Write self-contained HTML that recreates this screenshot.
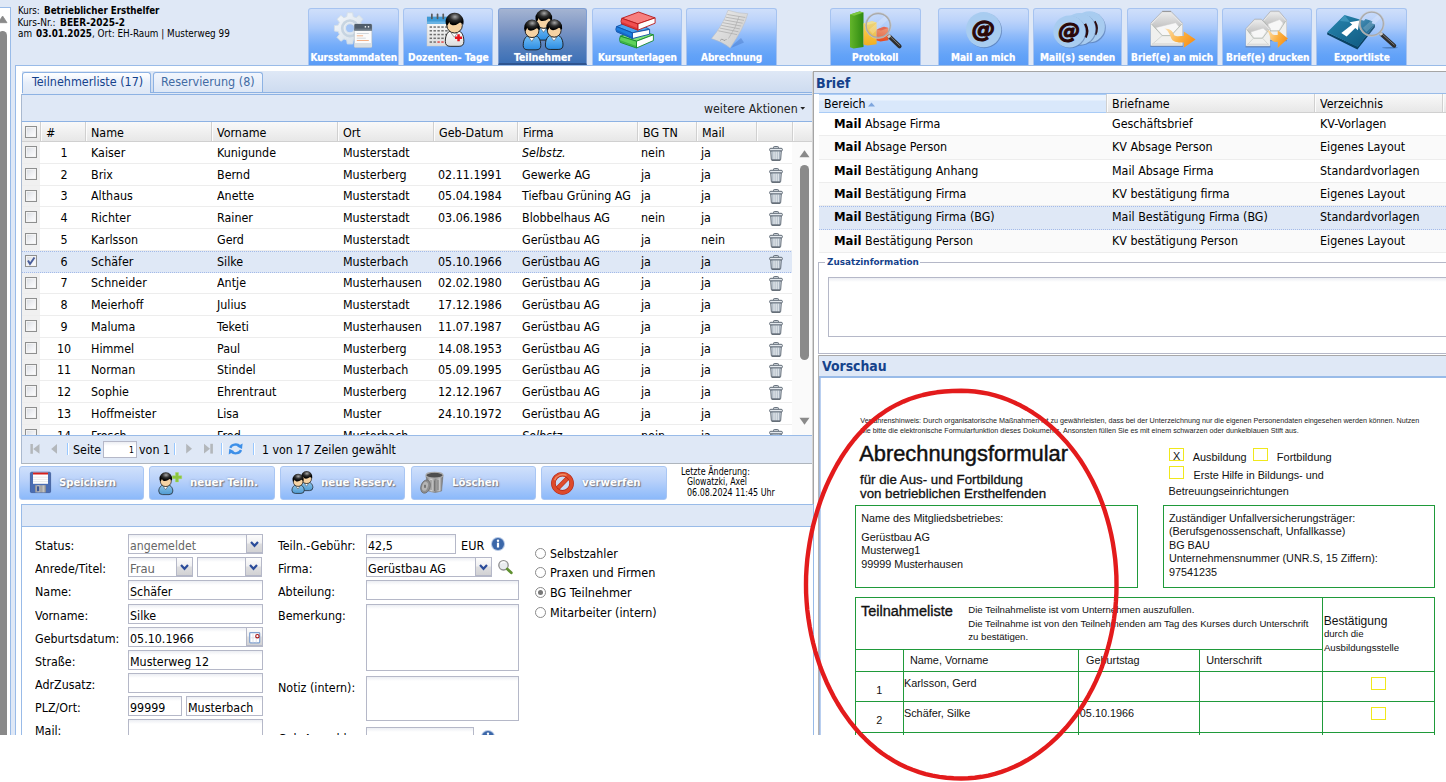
<!DOCTYPE html><html lang="de"><head><meta charset="utf-8"><title>Teilnehmer</title><style>
*{box-sizing:border-box;margin:0;padding:0}
html,body{width:1446px;height:782px;overflow:hidden;background:#fff}
body{position:relative;font-family:"DejaVu Sans Condensed","Liberation Sans",sans-serif;font-size:13px;color:#000}
.a{position:absolute}
.x{position:absolute;white-space:pre}
.bg{position:absolute;left:0;top:0;width:1446px;height:735px;background:#dfe8f6;overflow:hidden}
.tb{position:absolute;top:8px;width:90px;height:57px;border:1px solid #a6c3f0;border-bottom:0;border-radius:3px 3px 0 0;background:linear-gradient(#cfdffa 0%,#bcd3fa 21%,#a7c8fa 35%,#90bbfa 47%,#74acf9 65%,#63a3f8 82%,#5a9cf7 100%)}
.tb.on{border-color:#7f9fd4;background:linear-gradient(#a4b4d2 0%,#8098c5 35%,#557fbc 70%,#3c70b6 100%);border-bottom:2px solid #2e548f}
.tl{color:#fff;text-shadow:0 0 1px rgba(255,255,255,.55)}
.btn{position:absolute;top:466px;width:125px;height:34px;border:1px solid #a9c6f3;border-radius:3px;background:linear-gradient(#cfe0fb 0%,#bad2fa 40%,#8bb9fa 100%)}
.bl{color:#fff;text-shadow:1px 1px 1px #7d7a80,0 0 2px rgba(120,140,180,.8)}
.hd{position:absolute;background:linear-gradient(#f9f9f9 0%,#f2f2f2 40%,#e7e7e7 100%);border-bottom:1px solid #d0d0d0}
.hs{position:absolute;width:2px;border-left:1px solid #d0d0d0;border-right:1px solid #fcfcfc}
.row{position:absolute;left:0;width:771px;height:21.75px;border-bottom:1px solid #ededed;background:#fff}
.row.sel{background:#dfe8f6;border-top:1px dotted #a3bae9;border-bottom:1px dotted #a3bae9}
.cb{position:absolute;width:12px;height:12px;border:1px solid #8e8f8f;background:linear-gradient(135deg,#d6dae0 0%,#f0f1f4 55%,#fff 100%);box-shadow:inset 0 0 0 1px #f3f3f3}
.inp{position:absolute;border:1px solid #b5b8c8;background:#fff linear-gradient(#eceef3 0,#fff 4px)}
.trg{position:absolute;right:0;top:0;width:16px;bottom:0;border-left:1px solid #b5b8c8;border-bottom:1px solid #b5b8c8;background:linear-gradient(#fcfcfc 0%,#f1f1f2 46%,#dddddf 54%,#d2d2d4 100%)}
.rad{position:absolute;width:11px;height:11px;border:1px solid #8a8a8a;border-radius:50%;background:#fff}
.g{position:absolute;background:#1f9a3a}
.yb{position:absolute;border:1px solid #f0e81c;background:#fff}
.brow{position:absolute;left:819px;width:627px;border-bottom:1px solid #ededed;background:#fff}
.brow.alt{background:#fafafa}
.brow.sel{background:#dfe8f6;border-top:1px dotted #a3bae9;border-bottom:1px dotted #a3bae9}
</style></head><body>
<div class="bg">
<svg width="0" height="0" style="position:absolute"><defs>
<linearGradient id="gBlue" x1="0" y1="0" x2="0" y2="1"><stop offset="0" stop-color="#7cc4f8"/><stop offset="1" stop-color="#2b8ce2"/></linearGradient>
<linearGradient id="gBlue2" x1="0" y1="0" x2="0" y2="1"><stop offset="0" stop-color="#8fc6ea"/><stop offset="1" stop-color="#4f9bd2"/></linearGradient>
<linearGradient id="gWhite" x1="0" y1="0" x2="0" y2="1"><stop offset="0" stop-color="#ffffff"/><stop offset="1" stop-color="#dcdcdc"/></linearGradient>
<radialGradient id="gHair" cx="0.52" cy="0.3" r="0.55"><stop offset="0" stop-color="#a8a8a8"/><stop offset="0.5" stop-color="#303030"/><stop offset="1" stop-color="#000"/></radialGradient>
<linearGradient id="gGear" x1="0" y1="0" x2="1" y2="1"><stop offset="0" stop-color="#f6f9fc"/><stop offset="1" stop-color="#cfdbe6"/></linearGradient>
<linearGradient id="gGreen" x1="0" y1="0" x2="1" y2="0"><stop offset="0" stop-color="#63b52a"/><stop offset="1" stop-color="#2f8a12"/></linearGradient>
<linearGradient id="gYel" x1="0" y1="0" x2="0" y2="1"><stop offset="0" stop-color="#fbd65a"/><stop offset="1" stop-color="#f2ae22"/></linearGradient>
<linearGradient id="gRed" x1="0" y1="0" x2="0" y2="1"><stop offset="0" stop-color="#f59060"/><stop offset="1" stop-color="#e8491f"/></linearGradient>
<linearGradient id="gLens" x1="0" y1="0" x2="1" y2="1"><stop offset="0" stop-color="#d8e8fc" stop-opacity="0.35"/><stop offset="0.5" stop-color="#a8c8f8" stop-opacity="0.12"/><stop offset="1" stop-color="#e8f0fc" stop-opacity="0.2"/></linearGradient>
<linearGradient id="gEnv" x1="0" y1="0" x2="0" y2="1"><stop offset="0" stop-color="#e4e4e4"/><stop offset="0.5" stop-color="#ededed"/><stop offset="1" stop-color="#f4f4f2"/></linearGradient>
<linearGradient id="gEnvIn" x1="0" y1="0" x2="0" y2="1"><stop offset="0" stop-color="#e9e9e9"/><stop offset="1" stop-color="#bdbdbd"/></linearGradient>
<linearGradient id="gArr" x1="0" y1="0" x2="1" y2="0.4"><stop offset="0" stop-color="#fde3b6"/><stop offset="0.6" stop-color="#fbb040"/><stop offset="1" stop-color="#f7941d"/></linearGradient>
<linearGradient id="gFold" x1="0" y1="0" x2="1" y2="1"><stop offset="0" stop-color="#2887b0"/><stop offset="1" stop-color="#0d557c"/></linearGradient>
<linearGradient id="gSilver" x1="0" y1="0" x2="1" y2="0"><stop offset="0" stop-color="#6e6e6e"/><stop offset="0.3" stop-color="#d6d6d6"/><stop offset="0.55" stop-color="#8a8a8a"/><stop offset="0.8" stop-color="#c8c8c8"/><stop offset="1" stop-color="#626262"/></linearGradient>
<linearGradient id="gPaper" x1="0" y1="0" x2="1" y2="1"><stop offset="0" stop-color="#ececec"/><stop offset="1" stop-color="#c9c9c9"/></linearGradient>
<radialGradient id="gNo" cx="0.4" cy="0.35" r="0.7"><stop offset="0" stop-color="#f07a4a"/><stop offset="0.7" stop-color="#d9432a"/><stop offset="1" stop-color="#a81c10"/></radialGradient>
</defs></svg>
<div class="a" style="left:0;top:7px;width:11px;height:728px;background:#fff;border-top:1px solid #99bbe8;border-right:1px solid #99bbe8"></div>
<div class="a" style="left:-2.2px;top:31px;width:8.8px;height:720px;background:#898989;border-radius:4.4px"></div>
<svg class="a" style="left:0;top:14px" width="8" height="10"><path d="M-1.8 8.7 L2.6 2 L7 8.7 Z" fill="#898989" stroke="#898989" stroke-width="0.8" stroke-linejoin="round"/></svg>
<div class="x" style="left:17.50px;top:5.15px;font-size:10px;line-height:12.5px;transform:scaleX(0.9683);transform-origin:0 50%;">Kurs: </div>
<div class="x" style="left:43.69px;top:5.15px;font-size:10px;line-height:12.5px;font-weight:bold;transform:scaleX(0.9683);transform-origin:0 50%;">Betrieblicher Ersthelfer</div>
<div class="x" style="left:17.50px;top:16.75px;font-size:10px;line-height:12.5px;">Kurs-Nr.: </div>
<div class="x" style="left:60.12px;top:16.75px;font-size:10px;line-height:12.5px;font-weight:bold;">BEER-2025-2</div>
<div class="x" style="left:17.50px;top:28.15px;font-size:10px;line-height:12.5px;transform:scaleX(0.9830);transform-origin:0 50%;">am </div>
<div class="x" style="left:35.95px;top:28.15px;font-size:10px;line-height:12.5px;font-weight:bold;transform:scaleX(0.9830);transform-origin:0 50%;">03.01.2025</div>
<div class="x" style="left:91.90px;top:28.15px;font-size:10px;line-height:12.5px;transform:scaleX(0.9830);transform-origin:0 50%;">, Ort: EH-Raum | Musterweg 99</div>
<div class="tb" style="left:308px;width:91px"><svg class="a" style="left:0px;top:0px" width="89" height="50" viewBox="309 9 89 50"><path d="M347.28 12.74 L352.72 12.74 L353.22 16.53 L356.04 17.7 L359.09 15.37 L362.93 19.21 L360.6 22.26 L361.77 25.08 L365.56 25.58 L365.56 31.02 L361.77 31.52 L360.6 34.34 L362.93 37.39 L359.09 41.23 L356.04 38.9 L353.22 40.07 L352.72 43.86 L347.28 43.86 L346.78 40.07 L343.96 38.9 L340.91 41.23 L337.07 37.39 L339.4 34.34 L338.23 31.52 L334.44 31.02 L334.44 25.58 L338.23 25.08 L339.4 22.26 L337.07 19.21 L340.91 15.37 L343.96 17.7 L346.78 16.53Z" fill="url(#gGear)" stroke="#d4dfe9" stroke-width="1" stroke-linejoin="round"/><circle cx="350" cy="28.3" r="7.8" fill="none" stroke="#c3d2df" stroke-width="2.6" opacity="0.9"/><circle cx="350" cy="28.3" r="4.6" fill="#a5c6f6" stroke="#dbe5ee" stroke-width="1.2"/><rect x="354.3" y="24" width="17.6" height="23.4" rx="1.2" fill="#fbfbfb" stroke="#aab4bd" stroke-width="0.6"/><path d="M354.3 25.2a1.2 1.2 0 0 1 1.2-1.2h15.2a1.2 1.2 0 0 1 1.2 1.2v5.3h-17.6z" fill="#4f5d6b"/><rect x="354.3" y="28.6" width="17.6" height="2" fill="#6d7a86"/><rect x="364.7" y="26" width="1.4" height="1.6" fill="#e8ecef"/><rect x="367.8" y="26" width="1.4" height="1.6" fill="#e8ecef"/><rect x="356.8" y="33" width="12" height="0.8" fill="#c7ced4"/><rect x="356.8" y="35.3" width="6.3" height="1" fill="#f4b48a"/><rect x="356.8" y="37.7" width="9" height="0.9" fill="#cfd6db"/><rect x="356.8" y="40" width="12" height="0.9" fill="#f2a878"/><rect x="354.6" y="43" width="17" height="4.1" fill="#d9dfe3"/></svg></div>
<div class="x tl" style="left:310.40px;top:51.65px;font-size:10px;line-height:12.5px;font-weight:bold;">Kursstammdaten</div>
<div class="tb" style="left:403px;width:90px"><svg class="a" style="left:0px;top:0px" width="89" height="50" viewBox="404 9 89 50"><rect x="427" y="17" width="22" height="29" fill="url(#gWhite)" stroke="#c8c8c8" stroke-width="0.5"/><rect x="427" y="16.7" width="22" height="7.2" fill="#3e9ad6"/><rect x="427" y="21.5" width="22" height="2.4" fill="#6bb4e4"/><rect x="431" y="13.6" width="1.7" height="5.6" rx="0.8" fill="#5a5a5a"/><rect x="436.7" y="13.6" width="1.7" height="5.6" rx="0.8" fill="#5a5a5a"/><rect x="442.4" y="13.6" width="1.7" height="5.6" rx="0.8" fill="#5a5a5a"/><rect x="429.6" y="26.3" width="2.4" height="1.5" fill="#6e6e6e"/><rect x="433.5" y="26.3" width="2.4" height="1.5" fill="#6e6e6e"/><rect x="437.4" y="26.3" width="2.4" height="1.5" fill="#6e6e6e"/><rect x="441.3" y="26.3" width="2.4" height="1.5" fill="#6e6e6e"/><rect x="445.2" y="26.3" width="2.4" height="1.5" fill="#6e6e6e"/><rect x="429.6" y="30.05" width="2.4" height="1.5" fill="#6e6e6e"/><rect x="433.5" y="30.05" width="2.4" height="1.5" fill="#6e6e6e"/><rect x="437.4" y="30.05" width="2.4" height="1.5" fill="#6e6e6e"/><rect x="441.3" y="30.05" width="2.4" height="1.5" fill="#6e6e6e"/><rect x="445.2" y="30.05" width="2.4" height="1.5" fill="#6e6e6e"/><rect x="429.6" y="33.8" width="2.4" height="1.5" fill="#6e6e6e"/><rect x="433.5" y="33.8" width="2.4" height="1.5" fill="#6e6e6e"/><rect x="437.4" y="33.8" width="2.4" height="1.5" fill="#6e6e6e"/><rect x="441.3" y="33.8" width="2.4" height="1.5" fill="#6e6e6e"/><rect x="445.2" y="33.8" width="2.4" height="1.5" fill="#6e6e6e"/><rect x="429.6" y="37.55" width="2.4" height="1.5" fill="#6e6e6e"/><rect x="433.5" y="37.55" width="2.4" height="1.5" fill="#6e6e6e"/><rect x="437.4" y="37.55" width="2.4" height="1.5" fill="#6e6e6e"/><rect x="441.3" y="37.55" width="2.4" height="1.5" fill="#6e6e6e"/><rect x="445.2" y="37.55" width="2.4" height="1.5" fill="#6e6e6e"/><rect x="429.6" y="41.3" width="2.4" height="1.5" fill="#6e6e6e"/><rect x="433.5" y="41.3" width="2.4" height="1.5" fill="#6e6e6e"/><rect x="437.4" y="41.3" width="2.4" height="1.5" fill="#e04848"/><rect x="441.3" y="41.3" width="2.4" height="1.5" fill="#e04848"/><path d="M445.33 41.37 Q445.33 46.32 450.1 46.32 L459.1 46.32 Q463.87 46.32 463.87 41.37 C463.87 34.85 461.35 29.9 454.6 29.9 C447.85 29.9 445.33 34.85 445.33 41.37Z" fill="url(#gWhite)" stroke="#1a1a1a" stroke-width="0.9"/><path d="M450.82 32.6 L457.3 33.05 L454.42 37.28Z" fill="#fff" stroke="#444" stroke-width="0.5" stroke-linejoin="round"/><ellipse cx="454.6" cy="25.4" rx="7.74" ry="7.56" fill="#f6d3a3" stroke="#1a1a1a" stroke-width="0.9"/><path d="M445.7 23.15 A9 9 0 1 1 463.5 23.15 L463.24 24.68 Q461.98 22.88 460 22.43 Q455.5 25.94 451.9 25.04 Q449.56 24.5 449.2 21.98 Q448.3 24.68 446.86 26.12 L445.7 23.15Z" fill="url(#gHair)"/><path d="M455 36.5h2.3v-2.3h2.5v2.3h2.3v2.5h-2.3v2.3h-2.5v-2.3h-2.3z" fill="#e8121a"/></svg></div>
<div class="x tl" style="left:407.70px;top:51.65px;font-size:10px;line-height:12.5px;font-weight:bold;transform:scaleX(1.0300);transform-origin:0 50%;">Dozenten- Tage</div>
<div class="tb on" style="left:498px;width:89px"><svg class="a" style="left:0px;top:0px" width="89" height="50" viewBox="499 9 89 50"><path d="M534.56 35.46 Q534.56 40.08 539.6 40.08 L548 40.08 Q553.04 40.08 553.04 35.46 C553.04 30.08 550.1 25.46 543.8 25.46 C537.5 25.46 534.56 30.08 534.56 35.46Z" fill="url(#gBlue)" stroke="#1a1a1a" stroke-width="0.9"/><path d="M540.27 27.98 L546.32 28.4 L543.63 32.35Z" fill="#fff" stroke="#444" stroke-width="0.5" stroke-linejoin="round"/><ellipse cx="543.8" cy="21.26" rx="7.22" ry="7.06" fill="#f6d3a3" stroke="#1a1a1a" stroke-width="0.9"/><path d="M535.49 19.16 A8.4 8.4 0 1 1 552.11 19.16 L551.86 20.59 Q550.69 18.91 548.84 18.49 Q544.64 21.76 541.28 20.92 Q539.1 20.42 538.76 18.07 Q537.92 20.59 536.58 21.93 L535.49 19.16Z" fill="url(#gHair)"/><path d="M523.2 45.44 Q523.2 49.84 528 49.84 L536 49.84 Q540.8 49.84 540.8 45.44 C540.8 39.2 538 34.8 532 34.8 C526 34.8 523.2 39.2 523.2 45.44Z" fill="url(#gBlue)" stroke="#1a1a1a" stroke-width="0.9"/><path d="M528.64 37.2 L534.4 37.6 L531.84 41.36Z" fill="#fff" stroke="#444" stroke-width="0.5" stroke-linejoin="round"/><ellipse cx="532" cy="30.8" rx="6.88" ry="6.72" fill="#f6d3a3" stroke="#1a1a1a" stroke-width="0.9"/><path d="M524.09 28.8 A8 8 0 1 1 539.91 28.8 L539.68 30.16 Q538.56 28.56 536.8 28.16 Q532.8 31.28 529.6 30.48 Q527.52 30 527.2 27.76 Q526.4 30.16 525.12 31.44 L524.09 28.8Z" fill="url(#gHair)"/><path d="M545.4 45.04 Q545.4 49.44 550.2 49.44 L558.2 49.44 Q563 49.44 563 45.04 C563 38.8 560.2 34.4 554.2 34.4 C548.2 34.4 545.4 38.8 545.4 45.04Z" fill="url(#gBlue)" stroke="#1a1a1a" stroke-width="0.9"/><path d="M550.84 36.8 L556.6 37.2 L554.04 40.96Z" fill="#fff" stroke="#444" stroke-width="0.5" stroke-linejoin="round"/><ellipse cx="554.2" cy="30.4" rx="6.88" ry="6.72" fill="#f6d3a3" stroke="#1a1a1a" stroke-width="0.9"/><path d="M546.29 28.4 A8 8 0 1 1 562.11 28.4 L561.88 29.76 Q560.76 28.16 559 27.76 Q555 30.88 551.8 30.08 Q549.72 29.6 549.4 27.36 Q548.6 29.76 547.32 31.04 L546.29 28.4Z" fill="url(#gHair)"/></svg></div>
<div class="x tl" style="left:513.80px;top:51.65px;font-size:10px;line-height:12.5px;font-weight:bold;transform:scaleX(1.0336);transform-origin:0 50%;">Teilnehmer</div>
<div class="tb" style="left:592px;width:90px"><svg class="a" style="left:0px;top:0px" width="89" height="50" viewBox="593 9 89 50"><path d="M620.3 36.2 L637 30 L653.4 34.8 L636.5 41.2Z" fill="#7fe27a" stroke="#168a2c" stroke-width="0.9" stroke-linejoin="round"/><path d="M636.5 41.2 L653.4 34.8 L653.4 40.599999999999994 L636.5 48.0Z" fill="#fff" stroke="#168a2c" stroke-width="0.9" stroke-linejoin="round"/><path d="M620.3 36.2 L636.5 41.2 L636.5 48.0 L620.3 42.4 Q618.6999999999999 39.6 620.3 36.2Z" fill="#5fd25a" stroke="#168a2c" stroke-width="0.9" stroke-linejoin="round"/><path d="M620.6999999999999 41.2 L636.1 46.7" stroke="#168a2c" stroke-width="1.4" opacity="0.45"/><path d="M616.6 26.6 L633 20 L649.6 29.4 L632.3 32.8Z" fill="#4aa3f0" stroke="#0d4fa8" stroke-width="0.9" stroke-linejoin="round"/><path d="M632.3 32.8 L649.6 29.4 L649.6 34.199999999999996 L632.3 38.599999999999994Z" fill="#fff" stroke="#0d4fa8" stroke-width="0.9" stroke-linejoin="round"/><path d="M616.6 26.6 L632.3 32.8 L632.3 38.599999999999994 L616.6 31.799999999999997 Q615.0 29.5 616.6 26.6Z" fill="#1e7fe0" stroke="#0d4fa8" stroke-width="0.9" stroke-linejoin="round"/><path d="M617.0 30.599999999999998 L631.9 37.3" stroke="#0d4fa8" stroke-width="1.4" opacity="0.45"/><path d="M621.8 18.3 L638.6 12 L655.1 17.9 L637.8 23.9Z" fill="#f77f7f" stroke="#b81818" stroke-width="0.9" stroke-linejoin="round"/><path d="M637.8 23.9 L655.1 17.9 L655.1 23.2 L637.8 30.2Z" fill="#fff" stroke="#b81818" stroke-width="0.9" stroke-linejoin="round"/><path d="M621.8 18.3 L637.8 23.9 L637.8 30.2 L621.8 24.0 Q620.1999999999999 21.45 621.8 18.3Z" fill="#f05050" stroke="#b81818" stroke-width="0.9" stroke-linejoin="round"/><path d="M622.1999999999999 22.8 L637.4 28.9" stroke="#b81818" stroke-width="1.4" opacity="0.45"/></svg></div>
<div class="x tl" style="left:597.60px;top:51.65px;font-size:10px;line-height:12.5px;font-weight:bold;transform:scaleX(1.0030);transform-origin:0 50%;">Kursunterlagen</div>
<div class="tb" style="left:686px;width:91px"><svg class="a" style="left:0px;top:0px" width="89" height="50" viewBox="687 9 89 50"><path d="M731 48 L744 42.5 L741 38 L734 44Z" fill="#3a66b8" opacity="0.35"/><path d="M728 10.3 Q738 13.5 747.8 13.7 Q744 28 730.1 47.9 Q722 41.5 711.5 38.6 Q723 25 728 10.3Z" fill="url(#gPaper)" stroke="#bdbdbd" stroke-width="0.5"/><path d="M727.3 14.5 L745.3 17.5" stroke="#a9a9a9" stroke-width="0.7"/><path d="M725.8 17.21 L743.94 20.36" stroke="#a9a9a9" stroke-width="0.7"/><path d="M724.3 19.93 L742.59 23.21" stroke="#a9a9a9" stroke-width="0.7"/><path d="M722.8 22.64 L741.23 26.07" stroke="#a9a9a9" stroke-width="0.7"/><path d="M721.3 25.36 L739.87 28.93" stroke="#a9a9a9" stroke-width="0.7"/><path d="M719.8 28.07 L738.51 31.79" stroke="#a9a9a9" stroke-width="0.7"/><path d="M718.3 30.79 L737.16 34.64" stroke="#a9a9a9" stroke-width="0.7"/><path d="M739 16.5 Q736 28 728.5 38.5" stroke="#a9a9a9" stroke-width="0.6" fill="none"/><path d="M720 40.5 q2 -2.5 3.5 -0.5 q1.5 1.5 3 -1" stroke="#8d8d8d" stroke-width="0.7" fill="none"/></svg></div>
<div class="x tl" style="left:700.90px;top:51.65px;font-size:10px;line-height:12.5px;font-weight:bold;transform:scaleX(0.9977);transform-origin:0 50%;">Abrechnung</div>
<div class="tb" style="left:830px;width:91px"><svg class="a" style="left:0px;top:0px" width="89" height="50" viewBox="831 9 89 50"><path d="M850 14.5 L859.5 11.4 L863.5 12.6 L863.5 47 L853.6 48.4 L850 47.3Z" fill="url(#gGreen)"/><path d="M850 14.5 L859.5 11.4 L863.5 12.6 L854 15.8Z" fill="#7cc840"/><path d="M863.5 23.5 L872 21.2 L876.6 22.5 L876.6 44.3 L867.5 45.5 L863.5 44.6Z" fill="url(#gYel)"/><path d="M863.5 23.5 L872 21.2 L876.6 22.5 L868 24.8Z" fill="#fde27a"/><path d="M876.6 29.5 L884 26.7 L888.4 28 L888.4 40.3 L880.5 41.4 L876.6 40.5Z" fill="url(#gRed)"/><path d="M876.6 29.5 L884 26.7 L888.4 28 L881 30.6Z" fill="#e8563a"/><circle cx="878.2" cy="25.5" r="12.2" fill="url(#gLens)"/><path d="M869.05 29.77 L884.91 15.74 L887.96 19.4 L872.71 34.04Z" fill="#fff" opacity="0.2"/><circle cx="878.2" cy="25.5" r="12.2" fill="none" stroke="#a9a9a9" stroke-width="1.7"/><circle cx="878.2" cy="25.5" r="13.1" fill="none" stroke="#d0d0d0" stroke-width="0.5"/><path d="M889.6 36.8 L899.5 46.3" stroke="#2e2e2e" stroke-width="4.2" stroke-linecap="round"/><path d="M889.9 36.2 L899.5 45.4" stroke="#7a7a7a" stroke-width="1" stroke-linecap="round"/><path d="M888.2 35.4 L890 37.2" stroke="#c9c9c9" stroke-width="3.4000000000000004" /></svg></div>
<div class="x tl" style="left:852.30px;top:51.65px;font-size:10px;line-height:12.5px;font-weight:bold;transform:scaleX(1.0160);transform-origin:0 50%;">Protokoll</div>
<div class="tb" style="left:938px;width:91px"><svg class="a" style="left:0px;top:0px" width="89" height="50" viewBox="939 9 89 50"><ellipse cx="984.5" cy="30.6" rx="17.6" ry="17.6" fill="#4d6c9c" opacity="0.55"/><ellipse cx="983.6" cy="29.7" rx="17.6" ry="17.6" fill="#a8ccf0"/><text x="983.6" y="36.52" text-anchor="middle" font-family="DejaVu Sans,Liberation Sans,sans-serif" font-weight="bold" font-style="italic" font-size="23.5" fill="#2b0808" stroke="#2b0808" stroke-width="1.1" stroke-linejoin="round">@</text></svg></div>
<div class="x tl" style="left:951.20px;top:51.65px;font-size:10px;line-height:12.5px;font-weight:bold;transform:scaleX(1.0043);transform-origin:0 50%;">Mail an mich</div>
<div class="tb" style="left:1033px;width:89px"><svg class="a" style="left:0px;top:0px" width="89" height="50" viewBox="1034 9 89 50"><ellipse cx="1090.2" cy="27.7" rx="15.6" ry="15.6" fill="#4d6c9c" opacity="0.55"/><ellipse cx="1089.3" cy="26.8" rx="15.6" ry="15.6" fill="#a8ccf0"/><path d="M1094.5 21.5 q4 7 0.5 13" stroke="#2b0808" stroke-width="2.6" fill="none"/><ellipse cx="1080.5" cy="29.8" rx="15.9" ry="15.9" fill="#4d6c9c" opacity="0.55"/><ellipse cx="1079.6" cy="28.9" rx="15.9" ry="15.9" fill="#a8ccf0"/><path d="M1085 23.8 q4 7 0.5 13.5" stroke="#2b0808" stroke-width="2.6" fill="none"/><ellipse cx="1070.2" cy="32.3" rx="16" ry="16" fill="#4d6c9c" opacity="0.55"/><ellipse cx="1069.3" cy="31.4" rx="16" ry="16" fill="#a8ccf0"/><text x="1069.3" y="37.78" text-anchor="middle" font-family="DejaVu Sans,Liberation Sans,sans-serif" font-weight="bold" font-style="italic" font-size="22" fill="#2b0808" stroke="#2b0808" stroke-width="1.1" stroke-linejoin="round">@</text></svg></div>
<div class="x tl" style="left:1040.30px;top:51.65px;font-size:10px;line-height:12.5px;font-weight:bold;transform:scaleX(1.0078);transform-origin:0 50%;">Mail(s) senden</div>
<div class="tb" style="left:1127px;width:91px"><svg class="a" style="left:0px;top:0px" width="89" height="50" viewBox="1128 9 89 50"><path d="M1150.3 46.3 L1183 46.3" stroke="#5a6f96" stroke-width="1.6" opacity="0.55"/><path d="M1150.9 23.2 L1162.25 11.4 L1171.05 11.4 L1182.4 23.2 L1182.4 45.4 L1150.9 45.4Z" fill="url(#gEnv)" stroke="#a9a9a9" stroke-width="0.7" stroke-linejoin="round"/><path d="M1162.25 11.4 L1171.05 11.4" stroke="#858585" stroke-width="0.7"/><path d="M1151.9 24 L1162.75 13 L1170.55 13 L1181.4 24 L1180.4 27.2 L1153.9 29.86Z" fill="url(#gEnvIn)"/><path d="M1155.7 27.64 L1175.7 22.76 L1179 26.75 L1170.65 35.63 L1162.65 35.63Z" fill="#f7f7f7" stroke="#cfcfcf" stroke-width="0.4"/><path d="M1150.9 23.2 L1162.15 35.63 L1171.15 35.63 L1182.4 23.2 L1182.4 45.4 L1150.9 45.4Z" fill="#f0f0ee" stroke="none"/><path d="M1151.5 24 L1162.15 35.63 L1171.15 35.63 L1181.8 24" stroke="#a3aca3" stroke-width="0.7" fill="none" stroke-linejoin="round"/><path d="M1151.7 44.8 L1162.15 35.63 M1181.6 44.8 L1171.15 35.63" stroke="#c2c8c2" stroke-width="0.6" fill="none"/><path d="M1151.9 44 L1181.4 44" stroke="#dcdcda" stroke-width="1.6"/><path d="M1164.3 28.4 C1170.15 28.7 1172.49 30.6 1174.44 35.48 C1176.39 36.68 1179.9 36.08 1183.8 36.08 L1183.8 31.4 L1195.6 39.5 L1183.8 47.7 L1183.8 42.43 C1177.95 42.83 1173.08 42.03 1171.32 38.5 C1169.76 33.31 1167.22 29.6 1164.3 28.4Z" fill="url(#gArr)"/></svg></div>
<div class="x tl" style="left:1131.40px;top:51.65px;font-size:10px;line-height:12.5px;font-weight:bold;transform:scaleX(1.0079);transform-origin:0 50%;">Brief(e) an mich</div>
<div class="tb" style="left:1222px;width:90px"><svg class="a" style="left:0px;top:0px" width="89" height="50" viewBox="1223 9 89 50"><path d="M1262.6 40.4 L1287 40.4" stroke="#5a6f96" stroke-width="1.6" opacity="0.55"/><path d="M1263.2 20 L1270.55 11.2 L1279.05 11.2 L1286.4 20 L1286.4 39.5 L1263.2 39.5Z" fill="url(#gEnv)" stroke="#a9a9a9" stroke-width="0.7" stroke-linejoin="round"/><path d="M1264.2 20.8 L1271.05 12.8 L1278.55 12.8 L1285.4 20.8 L1284.4 23.51 L1266.2 25.85Z" fill="url(#gEnvIn)"/><path d="M1268 23.9 L1279.7 19.61 L1283 23.12 L1278.8 30.92 L1270.8 30.92Z" fill="#f7f7f7" stroke="#cfcfcf" stroke-width="0.4"/><path d="M1263.2 20 L1270.3 30.92 L1279.3 30.92 L1286.4 20 L1286.4 39.5 L1263.2 39.5Z" fill="#f0f0ee" stroke="none"/><path d="M1263.8 20.8 L1270.3 30.92 L1279.3 30.92 L1285.8 20.8" stroke="#a3aca3" stroke-width="0.7" fill="none" stroke-linejoin="round"/><path d="M1264 38.9 L1270.3 30.92 M1285.6 38.9 L1279.3 30.92" stroke="#c2c8c2" stroke-width="0.6" fill="none"/><path d="M1264.2 38.1 L1285.4 38.1" stroke="#dcdcda" stroke-width="1.6"/><path d="M1245.5 46.7 L1270.5 46.7" stroke="#5a6f96" stroke-width="1.6" opacity="0.55"/><path d="M1246.1 28.5 L1254.65 19.2 L1261.35 19.2 L1269.9 28.5 L1269.9 45.8 L1246.1 45.8Z" fill="url(#gEnv)" stroke="#a9a9a9" stroke-width="0.7" stroke-linejoin="round"/><path d="M1247.1 29.3 L1255.15 20.8 L1260.85 20.8 L1268.9 29.3 L1267.9 31.61 L1249.1 33.69Z" fill="url(#gEnvIn)"/><path d="M1250.9 31.96 L1263.2 28.15 L1266.5 31.27 L1262 38.19 L1254 38.19Z" fill="#f7f7f7" stroke="#cfcfcf" stroke-width="0.4"/><path d="M1246.1 28.5 L1253.5 38.19 L1262.5 38.19 L1269.9 28.5 L1269.9 45.8 L1246.1 45.8Z" fill="#f0f0ee" stroke="none"/><path d="M1246.7 29.3 L1253.5 38.19 L1262.5 38.19 L1269.3 29.3" stroke="#a3aca3" stroke-width="0.7" fill="none" stroke-linejoin="round"/><path d="M1246.9 45.2 L1253.5 38.19 M1269.1 45.2 L1262.5 38.19" stroke="#c2c8c2" stroke-width="0.6" fill="none"/><path d="M1247.1 44.4 L1268.9 44.4" stroke="#dcdcda" stroke-width="1.6"/><path d="M1266.5 30 C1269.86 30.3 1271.2 32.2 1272.32 34.28 C1273.44 35.48 1275.46 34.88 1277.7 34.88 L1277.7 30.2 L1287.9 38.6 L1277.7 47.9 L1277.7 41.79 C1274.34 42.19 1271.54 41.39 1270.53 38.49 C1269.64 34.13 1268.18 31.2 1266.5 30Z" fill="url(#gArr)"/></svg></div>
<div class="x tl" style="left:1225.50px;top:51.65px;font-size:10px;line-height:12.5px;font-weight:bold;transform:scaleX(1.0110);transform-origin:0 50%;">Brief(e) drucken</div>
<div class="tb" style="left:1316px;width:91px"><svg class="a" style="left:0px;top:0px" width="89" height="50" viewBox="1317 9 89 50"><path d="M1327.2 34.4 L1357.4 49.4 L1374.9 27.2 L1374.9 24.3 L1357.6 46.4 L1327.2 32.3Z" fill="#0a4263"/><path d="M1327.2 32.3 L1344.5 15 L1364 20.8 L1365.5 19 L1372.5 21.2 L1371.6 23.2 L1374.9 24.3 L1357.6 47Z" fill="url(#gFold)"/><path d="M1344.5 15 L1350 22 L1340 21Z" fill="#5fb3d6" opacity="0.45"/><path d="M1341.3 33 L1352.2 24.6 L1349.6 22.3 L1359.3 20.6 L1357.9 30.3 L1355.3 27.9 L1346.6 36.4Z" fill="#fff"/><circle cx="1371.7" cy="23.8" r="11.8" fill="url(#gLens)"/><path d="M1362.85 27.93 L1378.19 14.36 L1381.14 17.9 L1366.39 32.06Z" fill="#fff" opacity="0.2"/><circle cx="1371.7" cy="23.8" r="11.8" fill="none" stroke="#a9a9a9" stroke-width="1.7"/><circle cx="1371.7" cy="23.8" r="12.7" fill="none" stroke="#d0d0d0" stroke-width="0.5"/><path d="M1381.6 34.5 L1394.2 45.8" stroke="#2e2e2e" stroke-width="4.0" stroke-linecap="round"/><path d="M1381.9 33.9 L1394.2 44.9" stroke="#7a7a7a" stroke-width="1" stroke-linecap="round"/><path d="M1380.2 33.1 L1382 34.9" stroke="#c9c9c9" stroke-width="3.2" /><ellipse cx="1390" cy="47.7" rx="8" ry="0.7" fill="#27507f" opacity="0.5"/></svg></div>
<div class="x tl" style="left:1333.60px;top:51.65px;font-size:10px;line-height:12.5px;font-weight:bold;transform:scaleX(1.0102);transform-origin:0 50%;">Exportliste</div>
<div class="a" style="left:15px;top:65px;width:1440px;height:680px;background:#fff;border:1px solid #99bbe8"></div>
<div class="a" style="left:22px;top:71px;width:791px;height:21px;background:linear-gradient(#dfe8f6,#cedcf0)"></div>
<div class="a" style="left:22px;top:92px;width:791px;height:3px;background:#dfe8f6;border-top:1px solid #8db2e3;border-bottom:1px solid #8db2e3"></div>
<div class="a" style="left:22px;top:72px;width:129px;height:21px;border:1px solid #8db2e3;border-bottom:0;border-radius:3px 3px 0 0;background:linear-gradient(#fff,#e6eefa 50%,#dfe8f6)"></div>
<div class="a" style="left:153px;top:72px;width:110px;height:20px;border:1px solid #8db2e3;border-bottom:0;border-radius:3px 3px 0 0;background:linear-gradient(#f2f6fd,#dde7f6)"></div>
<div class="x" style="left:31.85px;top:73.88px;font-size:13px;line-height:16.25px;color:#15428b;transform:scaleX(0.9571);transform-origin:0 50%;">Teilnehmerliste (17)</div>
<div class="x" style="left:160.95px;top:73.88px;font-size:13px;line-height:16.25px;color:#416aa3;transform:scaleX(0.9603);transform-origin:0 50%;">Reservierung (8)</div>
<div class="a" style="left:22px;top:95px;width:791px;height:27px;background:#dfe8f6;border-bottom:1px solid #8db2e3"></div>
<div class="x" style="left:704.35px;top:101.08px;font-size:13px;line-height:16.25px;color:#222;transform:scaleX(0.9460);transform-origin:0 50%;">weitere Aktionen</div>
<svg class="a" style="left:799.5px;top:107px" width="6" height="4"><path d="M0.3 0H5.1L2.7 2.8Z" fill="#222"/></svg>
<div class="hd" style="left:22px;top:122px;width:791px;height:20px"></div>
<div class="hs" style="left:40px;top:122px;height:19px"></div>
<div class="hs" style="left:85px;top:122px;height:19px"></div>
<div class="hs" style="left:211px;top:122px;height:19px"></div>
<div class="hs" style="left:337px;top:122px;height:19px"></div>
<div class="hs" style="left:433px;top:122px;height:19px"></div>
<div class="hs" style="left:517px;top:122px;height:19px"></div>
<div class="hs" style="left:637px;top:122px;height:19px"></div>
<div class="hs" style="left:696px;top:122px;height:19px"></div>
<div class="hs" style="left:756px;top:122px;height:19px"></div>
<div class="hs" style="left:792px;top:122px;height:19px"></div>
<div class="x" style="left:46.15px;top:124.88px;font-size:13px;line-height:16.25px;transform:scaleX(0.9520);transform-origin:0 50%;">#</div>
<div class="x" style="left:90.75px;top:124.88px;font-size:13px;line-height:16.25px;transform:scaleX(0.9520);transform-origin:0 50%;">Name</div>
<div class="x" style="left:217.35px;top:124.88px;font-size:13px;line-height:16.25px;transform:scaleX(0.9520);transform-origin:0 50%;">Vorname</div>
<div class="x" style="left:343.25px;top:124.88px;font-size:13px;line-height:16.25px;transform:scaleX(0.9520);transform-origin:0 50%;">Ort</div>
<div class="x" style="left:438.95px;top:124.88px;font-size:13px;line-height:16.25px;transform:scaleX(0.9520);transform-origin:0 50%;">Geb-Datum</div>
<div class="x" style="left:523.15px;top:124.88px;font-size:13px;line-height:16.25px;transform:scaleX(0.9520);transform-origin:0 50%;">Firma</div>
<div class="x" style="left:642.85px;top:124.88px;font-size:13px;line-height:16.25px;transform:scaleX(0.9520);transform-origin:0 50%;">BG TN</div>
<div class="x" style="left:702.35px;top:124.88px;font-size:13px;line-height:16.25px;transform:scaleX(0.9520);transform-origin:0 50%;">Mail</div>
<div class="cb" style="left:25px;top:126px"></div>
<div class="a" style="left:22px;top:142px;width:771px;height:293px;overflow:hidden;background:#fff">
<div class="row" style="top:0.00px"><div class="a" style="left:0;top:0;width:18px;height:100%;background:#f0f0f0"></div></div>
<div class="cb" style="left:3px;top:4.00px"></div>
<div class="x" style="left:-58.00px;width:200px;text-align:center;top:2.97px;font-size:13px;line-height:16.25px;transform:scaleX(0.9520);transform-origin:50% 50%;">1</div>
<div class="x" style="left:68.75px;top:2.97px;font-size:13px;line-height:16.25px;transform:scaleX(0.9520);transform-origin:0 50%;">Kaiser</div>
<div class="x" style="left:194.65px;top:2.97px;font-size:13px;line-height:16.25px;transform:scaleX(0.9520);transform-origin:0 50%;">Kunigunde</div>
<div class="x" style="left:320.55px;top:2.97px;font-size:13px;line-height:16.25px;transform:scaleX(0.9520);transform-origin:0 50%;">Musterstadt</div>
<div class="x" style="left:500.35px;top:2.97px;font-size:13px;line-height:16.25px;font-style:italic;transform:scaleX(0.9520);transform-origin:0 50%;">Selbstz.</div>
<div class="x" style="left:619.35px;top:2.97px;font-size:13px;line-height:16.25px;transform:scaleX(0.9520);transform-origin:0 50%;">nein</div>
<div class="x" style="left:678.85px;top:2.97px;font-size:13px;line-height:16.25px;transform:scaleX(0.9520);transform-origin:0 50%;">ja</div>
<svg class="a" style="left:746.6px;top:3.90px" width="14" height="15" viewBox="0 0 14 15"><path d="M4.6 2.3v-1.1a0.7 0.7 0 0 1 .7-.7h3.4a0.7 0.7 0 0 1 .7.7v1.1" fill="#dfe4ea" stroke="#5a6572" stroke-width="0.9"/><rect x="0.6" y="2.3" width="12.8" height="2.7" rx="1.2" fill="#e4e9ee" stroke="#4f5a66" stroke-width="0.9"/><path d="M1.7 5.1h10.6l-0.6 8.2a0.9 0.9 0 0 1-0.9.8H3.2a0.9 0.9 0 0 1-0.9-.8z" fill="#d3dae1" stroke="#55606c" stroke-width="0.9"/><path d="M4 5.6v8M6.1 5.6v8M8.2 5.6v8M10.2 5.6v8" stroke="#9aa7b5" stroke-width="1.1"/><path d="M5 5.6v8M7.1 5.6v8M9.2 5.6v8" stroke="#eef1f4" stroke-width="0.9"/><path d="M2.6 14.1h8.8" stroke="#3d4752" stroke-width="1"/></svg>
<div class="row" style="top:21.75px"><div class="a" style="left:0;top:0;width:18px;height:100%;background:#f0f0f0"></div></div>
<div class="cb" style="left:3px;top:25.75px"></div>
<div class="x" style="left:-58.00px;width:200px;text-align:center;top:24.73px;font-size:13px;line-height:16.25px;transform:scaleX(0.9520);transform-origin:50% 50%;">2</div>
<div class="x" style="left:68.75px;top:24.73px;font-size:13px;line-height:16.25px;transform:scaleX(0.9520);transform-origin:0 50%;">Brix</div>
<div class="x" style="left:194.65px;top:24.73px;font-size:13px;line-height:16.25px;transform:scaleX(0.9520);transform-origin:0 50%;">Bernd</div>
<div class="x" style="left:320.55px;top:24.73px;font-size:13px;line-height:16.25px;transform:scaleX(0.9520);transform-origin:0 50%;">Musterberg</div>
<div class="x" style="left:416.15px;top:24.73px;font-size:13px;line-height:16.25px;transform:scaleX(0.9520);transform-origin:0 50%;">02.11.1991</div>
<div class="x" style="left:500.35px;top:24.73px;font-size:13px;line-height:16.25px;transform:scaleX(0.9520);transform-origin:0 50%;">Gewerke AG</div>
<div class="x" style="left:619.35px;top:24.73px;font-size:13px;line-height:16.25px;transform:scaleX(0.9520);transform-origin:0 50%;">ja</div>
<div class="x" style="left:678.85px;top:24.73px;font-size:13px;line-height:16.25px;transform:scaleX(0.9520);transform-origin:0 50%;">ja</div>
<svg class="a" style="left:746.6px;top:25.65px" width="14" height="15" viewBox="0 0 14 15"><path d="M4.6 2.3v-1.1a0.7 0.7 0 0 1 .7-.7h3.4a0.7 0.7 0 0 1 .7.7v1.1" fill="#dfe4ea" stroke="#5a6572" stroke-width="0.9"/><rect x="0.6" y="2.3" width="12.8" height="2.7" rx="1.2" fill="#e4e9ee" stroke="#4f5a66" stroke-width="0.9"/><path d="M1.7 5.1h10.6l-0.6 8.2a0.9 0.9 0 0 1-0.9.8H3.2a0.9 0.9 0 0 1-0.9-.8z" fill="#d3dae1" stroke="#55606c" stroke-width="0.9"/><path d="M4 5.6v8M6.1 5.6v8M8.2 5.6v8M10.2 5.6v8" stroke="#9aa7b5" stroke-width="1.1"/><path d="M5 5.6v8M7.1 5.6v8M9.2 5.6v8" stroke="#eef1f4" stroke-width="0.9"/><path d="M2.6 14.1h8.8" stroke="#3d4752" stroke-width="1"/></svg>
<div class="row" style="top:43.50px"><div class="a" style="left:0;top:0;width:18px;height:100%;background:#f0f0f0"></div></div>
<div class="cb" style="left:3px;top:47.50px"></div>
<div class="x" style="left:-58.00px;width:200px;text-align:center;top:46.48px;font-size:13px;line-height:16.25px;transform:scaleX(0.9520);transform-origin:50% 50%;">3</div>
<div class="x" style="left:68.75px;top:46.48px;font-size:13px;line-height:16.25px;transform:scaleX(0.9520);transform-origin:0 50%;">Althaus</div>
<div class="x" style="left:194.65px;top:46.48px;font-size:13px;line-height:16.25px;transform:scaleX(0.9520);transform-origin:0 50%;">Anette</div>
<div class="x" style="left:320.55px;top:46.48px;font-size:13px;line-height:16.25px;transform:scaleX(0.9520);transform-origin:0 50%;">Musterstadt</div>
<div class="x" style="left:416.15px;top:46.48px;font-size:13px;line-height:16.25px;transform:scaleX(0.9520);transform-origin:0 50%;">05.04.1984</div>
<div class="x" style="left:500.35px;top:46.48px;font-size:13px;line-height:16.25px;transform:scaleX(0.9520);transform-origin:0 50%;">Tiefbau Grüning AG</div>
<div class="x" style="left:619.35px;top:46.48px;font-size:13px;line-height:16.25px;transform:scaleX(0.9520);transform-origin:0 50%;">ja</div>
<div class="x" style="left:678.85px;top:46.48px;font-size:13px;line-height:16.25px;transform:scaleX(0.9520);transform-origin:0 50%;">ja</div>
<svg class="a" style="left:746.6px;top:47.40px" width="14" height="15" viewBox="0 0 14 15"><path d="M4.6 2.3v-1.1a0.7 0.7 0 0 1 .7-.7h3.4a0.7 0.7 0 0 1 .7.7v1.1" fill="#dfe4ea" stroke="#5a6572" stroke-width="0.9"/><rect x="0.6" y="2.3" width="12.8" height="2.7" rx="1.2" fill="#e4e9ee" stroke="#4f5a66" stroke-width="0.9"/><path d="M1.7 5.1h10.6l-0.6 8.2a0.9 0.9 0 0 1-0.9.8H3.2a0.9 0.9 0 0 1-0.9-.8z" fill="#d3dae1" stroke="#55606c" stroke-width="0.9"/><path d="M4 5.6v8M6.1 5.6v8M8.2 5.6v8M10.2 5.6v8" stroke="#9aa7b5" stroke-width="1.1"/><path d="M5 5.6v8M7.1 5.6v8M9.2 5.6v8" stroke="#eef1f4" stroke-width="0.9"/><path d="M2.6 14.1h8.8" stroke="#3d4752" stroke-width="1"/></svg>
<div class="row" style="top:65.25px"><div class="a" style="left:0;top:0;width:18px;height:100%;background:#f0f0f0"></div></div>
<div class="cb" style="left:3px;top:69.25px"></div>
<div class="x" style="left:-58.00px;width:200px;text-align:center;top:68.22px;font-size:13px;line-height:16.25px;transform:scaleX(0.9520);transform-origin:50% 50%;">4</div>
<div class="x" style="left:68.75px;top:68.22px;font-size:13px;line-height:16.25px;transform:scaleX(0.9520);transform-origin:0 50%;">Richter</div>
<div class="x" style="left:194.65px;top:68.22px;font-size:13px;line-height:16.25px;transform:scaleX(0.9520);transform-origin:0 50%;">Rainer</div>
<div class="x" style="left:320.55px;top:68.22px;font-size:13px;line-height:16.25px;transform:scaleX(0.9520);transform-origin:0 50%;">Musterstadt</div>
<div class="x" style="left:416.15px;top:68.22px;font-size:13px;line-height:16.25px;transform:scaleX(0.9520);transform-origin:0 50%;">03.06.1986</div>
<div class="x" style="left:500.35px;top:68.22px;font-size:13px;line-height:16.25px;transform:scaleX(0.9520);transform-origin:0 50%;">Blobbelhaus AG</div>
<div class="x" style="left:619.35px;top:68.22px;font-size:13px;line-height:16.25px;transform:scaleX(0.9520);transform-origin:0 50%;">nein</div>
<div class="x" style="left:678.85px;top:68.22px;font-size:13px;line-height:16.25px;transform:scaleX(0.9520);transform-origin:0 50%;">ja</div>
<svg class="a" style="left:746.6px;top:69.15px" width="14" height="15" viewBox="0 0 14 15"><path d="M4.6 2.3v-1.1a0.7 0.7 0 0 1 .7-.7h3.4a0.7 0.7 0 0 1 .7.7v1.1" fill="#dfe4ea" stroke="#5a6572" stroke-width="0.9"/><rect x="0.6" y="2.3" width="12.8" height="2.7" rx="1.2" fill="#e4e9ee" stroke="#4f5a66" stroke-width="0.9"/><path d="M1.7 5.1h10.6l-0.6 8.2a0.9 0.9 0 0 1-0.9.8H3.2a0.9 0.9 0 0 1-0.9-.8z" fill="#d3dae1" stroke="#55606c" stroke-width="0.9"/><path d="M4 5.6v8M6.1 5.6v8M8.2 5.6v8M10.2 5.6v8" stroke="#9aa7b5" stroke-width="1.1"/><path d="M5 5.6v8M7.1 5.6v8M9.2 5.6v8" stroke="#eef1f4" stroke-width="0.9"/><path d="M2.6 14.1h8.8" stroke="#3d4752" stroke-width="1"/></svg>
<div class="row" style="top:87.00px"><div class="a" style="left:0;top:0;width:18px;height:100%;background:#f0f0f0"></div></div>
<div class="cb" style="left:3px;top:91.00px"></div>
<div class="x" style="left:-58.00px;width:200px;text-align:center;top:89.97px;font-size:13px;line-height:16.25px;transform:scaleX(0.9520);transform-origin:50% 50%;">5</div>
<div class="x" style="left:68.75px;top:89.97px;font-size:13px;line-height:16.25px;transform:scaleX(0.9520);transform-origin:0 50%;">Karlsson</div>
<div class="x" style="left:194.65px;top:89.97px;font-size:13px;line-height:16.25px;transform:scaleX(0.9520);transform-origin:0 50%;">Gerd</div>
<div class="x" style="left:320.55px;top:89.97px;font-size:13px;line-height:16.25px;transform:scaleX(0.9520);transform-origin:0 50%;">Musterstadt</div>
<div class="x" style="left:500.35px;top:89.97px;font-size:13px;line-height:16.25px;transform:scaleX(0.9520);transform-origin:0 50%;">Gerüstbau AG</div>
<div class="x" style="left:619.35px;top:89.97px;font-size:13px;line-height:16.25px;transform:scaleX(0.9520);transform-origin:0 50%;">ja</div>
<div class="x" style="left:678.85px;top:89.97px;font-size:13px;line-height:16.25px;transform:scaleX(0.9520);transform-origin:0 50%;">nein</div>
<svg class="a" style="left:746.6px;top:90.90px" width="14" height="15" viewBox="0 0 14 15"><path d="M4.6 2.3v-1.1a0.7 0.7 0 0 1 .7-.7h3.4a0.7 0.7 0 0 1 .7.7v1.1" fill="#dfe4ea" stroke="#5a6572" stroke-width="0.9"/><rect x="0.6" y="2.3" width="12.8" height="2.7" rx="1.2" fill="#e4e9ee" stroke="#4f5a66" stroke-width="0.9"/><path d="M1.7 5.1h10.6l-0.6 8.2a0.9 0.9 0 0 1-0.9.8H3.2a0.9 0.9 0 0 1-0.9-.8z" fill="#d3dae1" stroke="#55606c" stroke-width="0.9"/><path d="M4 5.6v8M6.1 5.6v8M8.2 5.6v8M10.2 5.6v8" stroke="#9aa7b5" stroke-width="1.1"/><path d="M5 5.6v8M7.1 5.6v8M9.2 5.6v8" stroke="#eef1f4" stroke-width="0.9"/><path d="M2.6 14.1h8.8" stroke="#3d4752" stroke-width="1"/></svg>
<div class="row sel" style="top:108.75px"><div class="a" style="left:0;top:0;width:18px;height:100%;background:#dfe8f6"></div></div>
<div class="cb" style="left:3px;top:112.75px"><svg class="a" style="left:0;top:0" width="10" height="10"><path d="M2 4.5L4 8L8.5 1.5" stroke="#4a5f9c" stroke-width="2" fill="none"/></svg></div>
<div class="x" style="left:-58.00px;width:200px;text-align:center;top:111.72px;font-size:13px;line-height:16.25px;transform:scaleX(0.9520);transform-origin:50% 50%;">6</div>
<div class="x" style="left:68.75px;top:111.72px;font-size:13px;line-height:16.25px;transform:scaleX(0.9520);transform-origin:0 50%;">Schäfer</div>
<div class="x" style="left:194.65px;top:111.72px;font-size:13px;line-height:16.25px;transform:scaleX(0.9520);transform-origin:0 50%;">Silke</div>
<div class="x" style="left:320.55px;top:111.72px;font-size:13px;line-height:16.25px;transform:scaleX(0.9520);transform-origin:0 50%;">Musterbach</div>
<div class="x" style="left:416.15px;top:111.72px;font-size:13px;line-height:16.25px;transform:scaleX(0.9520);transform-origin:0 50%;">05.10.1966</div>
<div class="x" style="left:500.35px;top:111.72px;font-size:13px;line-height:16.25px;transform:scaleX(0.9520);transform-origin:0 50%;">Gerüstbau AG</div>
<div class="x" style="left:619.35px;top:111.72px;font-size:13px;line-height:16.25px;transform:scaleX(0.9520);transform-origin:0 50%;">ja</div>
<div class="x" style="left:678.85px;top:111.72px;font-size:13px;line-height:16.25px;transform:scaleX(0.9520);transform-origin:0 50%;">ja</div>
<svg class="a" style="left:746.6px;top:112.65px" width="14" height="15" viewBox="0 0 14 15"><path d="M4.6 2.3v-1.1a0.7 0.7 0 0 1 .7-.7h3.4a0.7 0.7 0 0 1 .7.7v1.1" fill="#dfe4ea" stroke="#5a6572" stroke-width="0.9"/><rect x="0.6" y="2.3" width="12.8" height="2.7" rx="1.2" fill="#e4e9ee" stroke="#4f5a66" stroke-width="0.9"/><path d="M1.7 5.1h10.6l-0.6 8.2a0.9 0.9 0 0 1-0.9.8H3.2a0.9 0.9 0 0 1-0.9-.8z" fill="#d3dae1" stroke="#55606c" stroke-width="0.9"/><path d="M4 5.6v8M6.1 5.6v8M8.2 5.6v8M10.2 5.6v8" stroke="#9aa7b5" stroke-width="1.1"/><path d="M5 5.6v8M7.1 5.6v8M9.2 5.6v8" stroke="#eef1f4" stroke-width="0.9"/><path d="M2.6 14.1h8.8" stroke="#3d4752" stroke-width="1"/></svg>
<div class="row" style="top:130.50px"><div class="a" style="left:0;top:0;width:18px;height:100%;background:#f0f0f0"></div></div>
<div class="cb" style="left:3px;top:134.50px"></div>
<div class="x" style="left:-58.00px;width:200px;text-align:center;top:133.47px;font-size:13px;line-height:16.25px;transform:scaleX(0.9520);transform-origin:50% 50%;">7</div>
<div class="x" style="left:68.75px;top:133.47px;font-size:13px;line-height:16.25px;transform:scaleX(0.9520);transform-origin:0 50%;">Schneider</div>
<div class="x" style="left:194.65px;top:133.47px;font-size:13px;line-height:16.25px;transform:scaleX(0.9520);transform-origin:0 50%;">Antje</div>
<div class="x" style="left:320.55px;top:133.47px;font-size:13px;line-height:16.25px;transform:scaleX(0.9520);transform-origin:0 50%;">Musterhausen</div>
<div class="x" style="left:416.15px;top:133.47px;font-size:13px;line-height:16.25px;transform:scaleX(0.9520);transform-origin:0 50%;">02.02.1980</div>
<div class="x" style="left:500.35px;top:133.47px;font-size:13px;line-height:16.25px;transform:scaleX(0.9520);transform-origin:0 50%;">Gerüstbau AG</div>
<div class="x" style="left:619.35px;top:133.47px;font-size:13px;line-height:16.25px;transform:scaleX(0.9520);transform-origin:0 50%;">ja</div>
<div class="x" style="left:678.85px;top:133.47px;font-size:13px;line-height:16.25px;transform:scaleX(0.9520);transform-origin:0 50%;">ja</div>
<svg class="a" style="left:746.6px;top:134.40px" width="14" height="15" viewBox="0 0 14 15"><path d="M4.6 2.3v-1.1a0.7 0.7 0 0 1 .7-.7h3.4a0.7 0.7 0 0 1 .7.7v1.1" fill="#dfe4ea" stroke="#5a6572" stroke-width="0.9"/><rect x="0.6" y="2.3" width="12.8" height="2.7" rx="1.2" fill="#e4e9ee" stroke="#4f5a66" stroke-width="0.9"/><path d="M1.7 5.1h10.6l-0.6 8.2a0.9 0.9 0 0 1-0.9.8H3.2a0.9 0.9 0 0 1-0.9-.8z" fill="#d3dae1" stroke="#55606c" stroke-width="0.9"/><path d="M4 5.6v8M6.1 5.6v8M8.2 5.6v8M10.2 5.6v8" stroke="#9aa7b5" stroke-width="1.1"/><path d="M5 5.6v8M7.1 5.6v8M9.2 5.6v8" stroke="#eef1f4" stroke-width="0.9"/><path d="M2.6 14.1h8.8" stroke="#3d4752" stroke-width="1"/></svg>
<div class="row" style="top:152.25px"><div class="a" style="left:0;top:0;width:18px;height:100%;background:#f0f0f0"></div></div>
<div class="cb" style="left:3px;top:156.25px"></div>
<div class="x" style="left:-58.00px;width:200px;text-align:center;top:155.22px;font-size:13px;line-height:16.25px;transform:scaleX(0.9520);transform-origin:50% 50%;">8</div>
<div class="x" style="left:68.75px;top:155.22px;font-size:13px;line-height:16.25px;transform:scaleX(0.9520);transform-origin:0 50%;">Meierhoff</div>
<div class="x" style="left:194.65px;top:155.22px;font-size:13px;line-height:16.25px;transform:scaleX(0.9520);transform-origin:0 50%;">Julius</div>
<div class="x" style="left:320.55px;top:155.22px;font-size:13px;line-height:16.25px;transform:scaleX(0.9520);transform-origin:0 50%;">Musterstadt</div>
<div class="x" style="left:416.15px;top:155.22px;font-size:13px;line-height:16.25px;transform:scaleX(0.9520);transform-origin:0 50%;">17.12.1986</div>
<div class="x" style="left:500.35px;top:155.22px;font-size:13px;line-height:16.25px;transform:scaleX(0.9520);transform-origin:0 50%;">Gerüstbau AG</div>
<div class="x" style="left:619.35px;top:155.22px;font-size:13px;line-height:16.25px;transform:scaleX(0.9520);transform-origin:0 50%;">ja</div>
<div class="x" style="left:678.85px;top:155.22px;font-size:13px;line-height:16.25px;transform:scaleX(0.9520);transform-origin:0 50%;">ja</div>
<svg class="a" style="left:746.6px;top:156.15px" width="14" height="15" viewBox="0 0 14 15"><path d="M4.6 2.3v-1.1a0.7 0.7 0 0 1 .7-.7h3.4a0.7 0.7 0 0 1 .7.7v1.1" fill="#dfe4ea" stroke="#5a6572" stroke-width="0.9"/><rect x="0.6" y="2.3" width="12.8" height="2.7" rx="1.2" fill="#e4e9ee" stroke="#4f5a66" stroke-width="0.9"/><path d="M1.7 5.1h10.6l-0.6 8.2a0.9 0.9 0 0 1-0.9.8H3.2a0.9 0.9 0 0 1-0.9-.8z" fill="#d3dae1" stroke="#55606c" stroke-width="0.9"/><path d="M4 5.6v8M6.1 5.6v8M8.2 5.6v8M10.2 5.6v8" stroke="#9aa7b5" stroke-width="1.1"/><path d="M5 5.6v8M7.1 5.6v8M9.2 5.6v8" stroke="#eef1f4" stroke-width="0.9"/><path d="M2.6 14.1h8.8" stroke="#3d4752" stroke-width="1"/></svg>
<div class="row" style="top:174.00px"><div class="a" style="left:0;top:0;width:18px;height:100%;background:#f0f0f0"></div></div>
<div class="cb" style="left:3px;top:178.00px"></div>
<div class="x" style="left:-58.00px;width:200px;text-align:center;top:176.97px;font-size:13px;line-height:16.25px;transform:scaleX(0.9520);transform-origin:50% 50%;">9</div>
<div class="x" style="left:68.75px;top:176.97px;font-size:13px;line-height:16.25px;transform:scaleX(0.9520);transform-origin:0 50%;">Maluma</div>
<div class="x" style="left:194.65px;top:176.97px;font-size:13px;line-height:16.25px;transform:scaleX(0.9520);transform-origin:0 50%;">Teketi</div>
<div class="x" style="left:320.55px;top:176.97px;font-size:13px;line-height:16.25px;transform:scaleX(0.9520);transform-origin:0 50%;">Musterhausen</div>
<div class="x" style="left:416.15px;top:176.97px;font-size:13px;line-height:16.25px;transform:scaleX(0.9520);transform-origin:0 50%;">11.07.1987</div>
<div class="x" style="left:500.35px;top:176.97px;font-size:13px;line-height:16.25px;transform:scaleX(0.9520);transform-origin:0 50%;">Gerüstbau AG</div>
<div class="x" style="left:619.35px;top:176.97px;font-size:13px;line-height:16.25px;transform:scaleX(0.9520);transform-origin:0 50%;">ja</div>
<div class="x" style="left:678.85px;top:176.97px;font-size:13px;line-height:16.25px;transform:scaleX(0.9520);transform-origin:0 50%;">ja</div>
<svg class="a" style="left:746.6px;top:177.90px" width="14" height="15" viewBox="0 0 14 15"><path d="M4.6 2.3v-1.1a0.7 0.7 0 0 1 .7-.7h3.4a0.7 0.7 0 0 1 .7.7v1.1" fill="#dfe4ea" stroke="#5a6572" stroke-width="0.9"/><rect x="0.6" y="2.3" width="12.8" height="2.7" rx="1.2" fill="#e4e9ee" stroke="#4f5a66" stroke-width="0.9"/><path d="M1.7 5.1h10.6l-0.6 8.2a0.9 0.9 0 0 1-0.9.8H3.2a0.9 0.9 0 0 1-0.9-.8z" fill="#d3dae1" stroke="#55606c" stroke-width="0.9"/><path d="M4 5.6v8M6.1 5.6v8M8.2 5.6v8M10.2 5.6v8" stroke="#9aa7b5" stroke-width="1.1"/><path d="M5 5.6v8M7.1 5.6v8M9.2 5.6v8" stroke="#eef1f4" stroke-width="0.9"/><path d="M2.6 14.1h8.8" stroke="#3d4752" stroke-width="1"/></svg>
<div class="row" style="top:195.75px"><div class="a" style="left:0;top:0;width:18px;height:100%;background:#f0f0f0"></div></div>
<div class="cb" style="left:3px;top:199.75px"></div>
<div class="x" style="left:-58.00px;width:200px;text-align:center;top:198.72px;font-size:13px;line-height:16.25px;transform:scaleX(0.9520);transform-origin:50% 50%;">10</div>
<div class="x" style="left:68.75px;top:198.72px;font-size:13px;line-height:16.25px;transform:scaleX(0.9520);transform-origin:0 50%;">Himmel</div>
<div class="x" style="left:194.65px;top:198.72px;font-size:13px;line-height:16.25px;transform:scaleX(0.9520);transform-origin:0 50%;">Paul</div>
<div class="x" style="left:320.55px;top:198.72px;font-size:13px;line-height:16.25px;transform:scaleX(0.9520);transform-origin:0 50%;">Musterberg</div>
<div class="x" style="left:416.15px;top:198.72px;font-size:13px;line-height:16.25px;transform:scaleX(0.9520);transform-origin:0 50%;">14.08.1953</div>
<div class="x" style="left:500.35px;top:198.72px;font-size:13px;line-height:16.25px;transform:scaleX(0.9520);transform-origin:0 50%;">Gerüstbau AG</div>
<div class="x" style="left:619.35px;top:198.72px;font-size:13px;line-height:16.25px;transform:scaleX(0.9520);transform-origin:0 50%;">ja</div>
<div class="x" style="left:678.85px;top:198.72px;font-size:13px;line-height:16.25px;transform:scaleX(0.9520);transform-origin:0 50%;">ja</div>
<svg class="a" style="left:746.6px;top:199.65px" width="14" height="15" viewBox="0 0 14 15"><path d="M4.6 2.3v-1.1a0.7 0.7 0 0 1 .7-.7h3.4a0.7 0.7 0 0 1 .7.7v1.1" fill="#dfe4ea" stroke="#5a6572" stroke-width="0.9"/><rect x="0.6" y="2.3" width="12.8" height="2.7" rx="1.2" fill="#e4e9ee" stroke="#4f5a66" stroke-width="0.9"/><path d="M1.7 5.1h10.6l-0.6 8.2a0.9 0.9 0 0 1-0.9.8H3.2a0.9 0.9 0 0 1-0.9-.8z" fill="#d3dae1" stroke="#55606c" stroke-width="0.9"/><path d="M4 5.6v8M6.1 5.6v8M8.2 5.6v8M10.2 5.6v8" stroke="#9aa7b5" stroke-width="1.1"/><path d="M5 5.6v8M7.1 5.6v8M9.2 5.6v8" stroke="#eef1f4" stroke-width="0.9"/><path d="M2.6 14.1h8.8" stroke="#3d4752" stroke-width="1"/></svg>
<div class="row" style="top:217.50px"><div class="a" style="left:0;top:0;width:18px;height:100%;background:#f0f0f0"></div></div>
<div class="cb" style="left:3px;top:221.50px"></div>
<div class="x" style="left:-58.00px;width:200px;text-align:center;top:220.47px;font-size:13px;line-height:16.25px;transform:scaleX(0.9520);transform-origin:50% 50%;">11</div>
<div class="x" style="left:68.75px;top:220.47px;font-size:13px;line-height:16.25px;transform:scaleX(0.9520);transform-origin:0 50%;">Norman</div>
<div class="x" style="left:194.65px;top:220.47px;font-size:13px;line-height:16.25px;transform:scaleX(0.9520);transform-origin:0 50%;">Stindel</div>
<div class="x" style="left:320.55px;top:220.47px;font-size:13px;line-height:16.25px;transform:scaleX(0.9520);transform-origin:0 50%;">Musterbach</div>
<div class="x" style="left:416.15px;top:220.47px;font-size:13px;line-height:16.25px;transform:scaleX(0.9520);transform-origin:0 50%;">05.09.1995</div>
<div class="x" style="left:500.35px;top:220.47px;font-size:13px;line-height:16.25px;transform:scaleX(0.9520);transform-origin:0 50%;">Gerüstbau AG</div>
<div class="x" style="left:619.35px;top:220.47px;font-size:13px;line-height:16.25px;transform:scaleX(0.9520);transform-origin:0 50%;">ja</div>
<div class="x" style="left:678.85px;top:220.47px;font-size:13px;line-height:16.25px;transform:scaleX(0.9520);transform-origin:0 50%;">ja</div>
<svg class="a" style="left:746.6px;top:221.40px" width="14" height="15" viewBox="0 0 14 15"><path d="M4.6 2.3v-1.1a0.7 0.7 0 0 1 .7-.7h3.4a0.7 0.7 0 0 1 .7.7v1.1" fill="#dfe4ea" stroke="#5a6572" stroke-width="0.9"/><rect x="0.6" y="2.3" width="12.8" height="2.7" rx="1.2" fill="#e4e9ee" stroke="#4f5a66" stroke-width="0.9"/><path d="M1.7 5.1h10.6l-0.6 8.2a0.9 0.9 0 0 1-0.9.8H3.2a0.9 0.9 0 0 1-0.9-.8z" fill="#d3dae1" stroke="#55606c" stroke-width="0.9"/><path d="M4 5.6v8M6.1 5.6v8M8.2 5.6v8M10.2 5.6v8" stroke="#9aa7b5" stroke-width="1.1"/><path d="M5 5.6v8M7.1 5.6v8M9.2 5.6v8" stroke="#eef1f4" stroke-width="0.9"/><path d="M2.6 14.1h8.8" stroke="#3d4752" stroke-width="1"/></svg>
<div class="row" style="top:239.25px"><div class="a" style="left:0;top:0;width:18px;height:100%;background:#f0f0f0"></div></div>
<div class="cb" style="left:3px;top:243.25px"></div>
<div class="x" style="left:-58.00px;width:200px;text-align:center;top:242.22px;font-size:13px;line-height:16.25px;transform:scaleX(0.9520);transform-origin:50% 50%;">12</div>
<div class="x" style="left:68.75px;top:242.22px;font-size:13px;line-height:16.25px;transform:scaleX(0.9520);transform-origin:0 50%;">Sophie</div>
<div class="x" style="left:194.65px;top:242.22px;font-size:13px;line-height:16.25px;transform:scaleX(0.9520);transform-origin:0 50%;">Ehrentraut</div>
<div class="x" style="left:320.55px;top:242.22px;font-size:13px;line-height:16.25px;transform:scaleX(0.9520);transform-origin:0 50%;">Musterberg</div>
<div class="x" style="left:416.15px;top:242.22px;font-size:13px;line-height:16.25px;transform:scaleX(0.9520);transform-origin:0 50%;">12.12.1967</div>
<div class="x" style="left:500.35px;top:242.22px;font-size:13px;line-height:16.25px;transform:scaleX(0.9520);transform-origin:0 50%;">Gerüstbau AG</div>
<div class="x" style="left:619.35px;top:242.22px;font-size:13px;line-height:16.25px;transform:scaleX(0.9520);transform-origin:0 50%;">ja</div>
<div class="x" style="left:678.85px;top:242.22px;font-size:13px;line-height:16.25px;transform:scaleX(0.9520);transform-origin:0 50%;">ja</div>
<svg class="a" style="left:746.6px;top:243.15px" width="14" height="15" viewBox="0 0 14 15"><path d="M4.6 2.3v-1.1a0.7 0.7 0 0 1 .7-.7h3.4a0.7 0.7 0 0 1 .7.7v1.1" fill="#dfe4ea" stroke="#5a6572" stroke-width="0.9"/><rect x="0.6" y="2.3" width="12.8" height="2.7" rx="1.2" fill="#e4e9ee" stroke="#4f5a66" stroke-width="0.9"/><path d="M1.7 5.1h10.6l-0.6 8.2a0.9 0.9 0 0 1-0.9.8H3.2a0.9 0.9 0 0 1-0.9-.8z" fill="#d3dae1" stroke="#55606c" stroke-width="0.9"/><path d="M4 5.6v8M6.1 5.6v8M8.2 5.6v8M10.2 5.6v8" stroke="#9aa7b5" stroke-width="1.1"/><path d="M5 5.6v8M7.1 5.6v8M9.2 5.6v8" stroke="#eef1f4" stroke-width="0.9"/><path d="M2.6 14.1h8.8" stroke="#3d4752" stroke-width="1"/></svg>
<div class="row" style="top:261.00px"><div class="a" style="left:0;top:0;width:18px;height:100%;background:#f0f0f0"></div></div>
<div class="cb" style="left:3px;top:265.00px"></div>
<div class="x" style="left:-58.00px;width:200px;text-align:center;top:263.98px;font-size:13px;line-height:16.25px;transform:scaleX(0.9520);transform-origin:50% 50%;">13</div>
<div class="x" style="left:68.75px;top:263.98px;font-size:13px;line-height:16.25px;transform:scaleX(0.9520);transform-origin:0 50%;">Hoffmeister</div>
<div class="x" style="left:194.65px;top:263.98px;font-size:13px;line-height:16.25px;transform:scaleX(0.9520);transform-origin:0 50%;">Lisa</div>
<div class="x" style="left:320.55px;top:263.98px;font-size:13px;line-height:16.25px;transform:scaleX(0.9520);transform-origin:0 50%;">Muster</div>
<div class="x" style="left:416.15px;top:263.98px;font-size:13px;line-height:16.25px;transform:scaleX(0.9520);transform-origin:0 50%;">24.10.1972</div>
<div class="x" style="left:500.35px;top:263.98px;font-size:13px;line-height:16.25px;transform:scaleX(0.9520);transform-origin:0 50%;">Gerüstbau AG</div>
<div class="x" style="left:619.35px;top:263.98px;font-size:13px;line-height:16.25px;transform:scaleX(0.9520);transform-origin:0 50%;">ja</div>
<div class="x" style="left:678.85px;top:263.98px;font-size:13px;line-height:16.25px;transform:scaleX(0.9520);transform-origin:0 50%;">ja</div>
<svg class="a" style="left:746.6px;top:264.90px" width="14" height="15" viewBox="0 0 14 15"><path d="M4.6 2.3v-1.1a0.7 0.7 0 0 1 .7-.7h3.4a0.7 0.7 0 0 1 .7.7v1.1" fill="#dfe4ea" stroke="#5a6572" stroke-width="0.9"/><rect x="0.6" y="2.3" width="12.8" height="2.7" rx="1.2" fill="#e4e9ee" stroke="#4f5a66" stroke-width="0.9"/><path d="M1.7 5.1h10.6l-0.6 8.2a0.9 0.9 0 0 1-0.9.8H3.2a0.9 0.9 0 0 1-0.9-.8z" fill="#d3dae1" stroke="#55606c" stroke-width="0.9"/><path d="M4 5.6v8M6.1 5.6v8M8.2 5.6v8M10.2 5.6v8" stroke="#9aa7b5" stroke-width="1.1"/><path d="M5 5.6v8M7.1 5.6v8M9.2 5.6v8" stroke="#eef1f4" stroke-width="0.9"/><path d="M2.6 14.1h8.8" stroke="#3d4752" stroke-width="1"/></svg>
<div class="row" style="top:282.75px"><div class="a" style="left:0;top:0;width:18px;height:100%;background:#f0f0f0"></div></div>
<div class="cb" style="left:3px;top:286.75px"></div>
<div class="x" style="left:-58.00px;width:200px;text-align:center;top:285.73px;font-size:13px;line-height:16.25px;transform:scaleX(0.9520);transform-origin:50% 50%;">14</div>
<div class="x" style="left:68.75px;top:285.73px;font-size:13px;line-height:16.25px;transform:scaleX(0.9520);transform-origin:0 50%;">Frosch</div>
<div class="x" style="left:194.65px;top:285.73px;font-size:13px;line-height:16.25px;transform:scaleX(0.9520);transform-origin:0 50%;">Fred</div>
<div class="x" style="left:320.55px;top:285.73px;font-size:13px;line-height:16.25px;transform:scaleX(0.9520);transform-origin:0 50%;">Musterbach</div>
<div class="x" style="left:500.35px;top:285.73px;font-size:13px;line-height:16.25px;font-style:italic;transform:scaleX(0.9520);transform-origin:0 50%;">Selbstz.</div>
<div class="x" style="left:619.35px;top:285.73px;font-size:13px;line-height:16.25px;transform:scaleX(0.9520);transform-origin:0 50%;">nein</div>
<div class="x" style="left:678.85px;top:285.73px;font-size:13px;line-height:16.25px;transform:scaleX(0.9520);transform-origin:0 50%;">ja</div>
<svg class="a" style="left:746.6px;top:286.65px" width="14" height="15" viewBox="0 0 14 15"><path d="M4.6 2.3v-1.1a0.7 0.7 0 0 1 .7-.7h3.4a0.7 0.7 0 0 1 .7.7v1.1" fill="#dfe4ea" stroke="#5a6572" stroke-width="0.9"/><rect x="0.6" y="2.3" width="12.8" height="2.7" rx="1.2" fill="#e4e9ee" stroke="#4f5a66" stroke-width="0.9"/><path d="M1.7 5.1h10.6l-0.6 8.2a0.9 0.9 0 0 1-0.9.8H3.2a0.9 0.9 0 0 1-0.9-.8z" fill="#d3dae1" stroke="#55606c" stroke-width="0.9"/><path d="M4 5.6v8M6.1 5.6v8M8.2 5.6v8M10.2 5.6v8" stroke="#9aa7b5" stroke-width="1.1"/><path d="M5 5.6v8M7.1 5.6v8M9.2 5.6v8" stroke="#eef1f4" stroke-width="0.9"/><path d="M2.6 14.1h8.8" stroke="#3d4752" stroke-width="1"/></svg>
</div>
<div class="a" style="left:792px;top:142px;width:20px;height:293px;background:#fafafa"></div>
<svg class="a" style="left:799px;top:149px" width="11" height="9"><path d="M0.5 8.3L5.5 1.2L10.5 8.3Z" fill="#8a8a8a"/></svg>
<div class="a" style="left:800px;top:165px;width:9px;height:194.6px;background:#8a8a8a;border-radius:4.5px"></div>
<svg class="a" style="left:799px;top:417px" width="11" height="9"><path d="M0.5 0.7L5.5 7.8L10.5 0.7Z" fill="#8a8a8a"/></svg>
<div class="a" style="left:22px;top:434.5px;width:791px;height:29.5px;background:#dfe8f6;border-top:1px solid #99bbe8;border-bottom:1px solid #aeb5bd"></div>
<svg class="a" style="left:22px;top:436px" width="240" height="27" viewBox="22 436 240 27"><rect x="30.4" y="444" width="2.5" height="9.8" fill="#b3b7bb"/><path d="M39.5 444 L33.2 448.9 L39.5 453.8Z" fill="#b3b7bb"/><path d="M57 444 L51.2 448.9 L57 453.8Z" fill="#b3b7bb"/><path d="M186.2 443.8 L192 448.7 L186.2 453.6Z" fill="#b3b7bb"/><path d="M204 443.8 L210 448.7 L204 453.6Z" fill="#b3b7bb"/><rect x="210.3" y="443.8" width="2.6" height="9.8" fill="#b3b7bb"/><path d="M230.3 447.8 A5.6 4.6 0 0 1 240 446.2" stroke="#3d8fe8" stroke-width="2.3" fill="none"/><path d="M242.6 443.6 L242 449 L237 446.6Z" fill="#3d8fe8"/><path d="M241 450 A5.6 4.6 0 0 1 231.3 451.6" stroke="#3d8fe8" stroke-width="2.3" fill="none"/><path d="M228.7 454.4 L229.3 448.8 L234.3 451.3Z" fill="#3d8fe8"/></svg>
<div class="x" style="left:73.05px;top:442.38px;font-size:13px;line-height:16.25px;transform:scaleX(0.9499);transform-origin:0 50%;">Seite</div>
<div class="inp" style="left:103px;top:440.5px;width:33.7px;height:17.2px"></div>
<div class="x" style="left:128.55px;top:445.38px;font-size:9px;line-height:11.25px;transform:scaleX(0.9520);transform-origin:0 50%;">1</div>
<div class="x" style="left:138.65px;top:442.38px;font-size:13px;line-height:16.25px;transform:scaleX(0.9519);transform-origin:0 50%;">von 1</div>
<div class="x" style="left:262.35px;top:442.38px;font-size:13px;line-height:16.25px;transform:scaleX(0.9455);transform-origin:0 50%;">1 von 17 Zeilen gewählt</div>
<div class="a" style="left:67px;top:443px;width:2px;height:12px;border-left:1px solid #98c8ff;border-right:1px solid #fff"></div>
<div class="a" style="left:174px;top:443px;width:2px;height:12px;border-left:1px solid #98c8ff;border-right:1px solid #fff"></div>
<div class="a" style="left:221px;top:443px;width:2px;height:12px;border-left:1px solid #98c8ff;border-right:1px solid #fff"></div>
<div class="a" style="left:253px;top:443px;width:2px;height:12px;border-left:1px solid #98c8ff;border-right:1px solid #fff"></div>
<div class="a" style="left:21px;top:94px;width:1px;height:370px;background:#a9b9d0"></div>
<div class="a" style="left:812px;top:72px;width:1px;height:663px;background:#d4d4d4"></div>
<div class="a" style="left:813px;top:71px;width:1px;height:664px;background:#a5a5a5"></div>
<div class="btn" style="left:19px;width:125px"><svg class="a" style="left:0px;top:0px" width="60" height="32" viewBox="20 467 60 32"><rect x="30.4" y="472.2" width="20.2" height="20.4" rx="1.2" fill="#4a6db3" stroke="#35518f" stroke-width="0.7"/><rect x="33" y="472.6" width="15" height="11.2" fill="#fff"/><rect x="33" y="472.6" width="15" height="1.9" fill="#d8201c"/><path d="M33 477.2h15M33 479.4h15M33 481.6h15" stroke="#dcdcdc" stroke-width="0.6"/><rect x="35.2" y="485.3" width="10.6" height="7" fill="#bdbdbd"/><rect x="35.2" y="485.3" width="10.6" height="7" fill="url(#gSilver)" opacity="0.6"/><rect x="37" y="486.3" width="2.2" height="5" fill="#3d5896"/></svg></div>
<div class="x bl" style="left:59.35px;top:476.23px;font-size:11px;line-height:13.75px;font-weight:bold;transform:scaleX(1.0182);transform-origin:0 50%;">Speichern</div>
<div class="btn" style="left:149px;width:126px"><svg class="a" style="left:0px;top:0px" width="60" height="32" viewBox="150 467 60 32"><path d="M158.76 491.09 Q158.76 494.61 162.6 494.61 L169 494.61 Q172.84 494.61 172.84 491.09 C172.84 487.88 170.6 484.36 165.8 484.36 C161 484.36 158.76 487.88 158.76 491.09Z" fill="url(#gBlue2)" stroke="#1a1a1a" stroke-width="0.7"/><path d="M163.11 486.28 L167.72 486.6 L165.67 489.61Z" fill="#fff" stroke="#444" stroke-width="0.5" stroke-linejoin="round"/><ellipse cx="165.8" cy="481.16" rx="5.5" ry="5.38" fill="#f6d3a3" stroke="#1a1a1a" stroke-width="0.7"/><path d="M159.47 479.56 A6.4 6.4 0 1 1 172.13 479.56 L171.94 480.65 Q171.05 479.37 169.64 479.05 Q166.44 481.54 163.88 480.9 Q162.22 480.52 161.96 478.73 Q161.32 480.65 160.3 481.67 L159.47 479.56Z" fill="url(#gHair)"/><path d="M175.5 472.5h3v3.2h3.2v3h-3.2v3.2h-3v-3.2h-3.2v-3h3.2z" fill="#8cc63f" stroke="#a9d95f" stroke-width="0.4"/></svg></div>
<div class="x bl" style="left:189.95px;top:476.23px;font-size:11px;line-height:13.75px;font-weight:bold;transform:scaleX(1.0390);transform-origin:0 50%;">neuer Teiln.</div>
<div class="btn" style="left:280px;width:125px"><svg class="a" style="left:0px;top:0px" width="60" height="32" viewBox="281 467 60 32"><path d="M300.54 487.53 Q300.54 490.61 303.9 490.61 L309.5 490.61 Q312.86 490.61 312.86 487.53 C312.86 484.72 310.9 481.64 306.7 481.64 C302.5 481.64 300.54 484.72 300.54 487.53Z" fill="url(#gBlue2)" stroke="#1a1a1a" stroke-width="0.7"/><path d="M304.35 483.32 L308.38 483.6 L306.59 486.23Z" fill="#fff" stroke="#444" stroke-width="0.5" stroke-linejoin="round"/><ellipse cx="306.7" cy="478.84" rx="4.82" ry="4.7" fill="#f6d3a3" stroke="#1a1a1a" stroke-width="0.7"/><path d="M301.16 477.44 A5.6 5.6 0 1 1 312.24 477.44 L312.08 478.39 Q311.29 477.27 310.06 476.99 Q307.26 479.18 305.02 478.62 Q303.56 478.28 303.34 476.71 Q302.78 478.39 301.88 479.29 L301.16 477.44Z" fill="url(#gHair)"/><path d="M291.94 490.33 Q291.94 493.41 295.3 493.41 L300.9 493.41 Q304.26 493.41 304.26 490.33 C304.26 487.52 302.3 484.44 298.1 484.44 C293.9 484.44 291.94 487.52 291.94 490.33Z" fill="url(#gBlue2)" stroke="#1a1a1a" stroke-width="0.7"/><path d="M295.75 486.12 L299.78 486.4 L297.99 489.03Z" fill="#fff" stroke="#444" stroke-width="0.5" stroke-linejoin="round"/><ellipse cx="298.1" cy="481.64" rx="4.82" ry="4.7" fill="#f6d3a3" stroke="#1a1a1a" stroke-width="0.7"/><path d="M292.56 480.24 A5.6 5.6 0 1 1 303.64 480.24 L303.48 481.19 Q302.69 480.07 301.46 479.79 Q298.66 481.98 296.42 481.42 Q294.96 481.08 294.74 479.51 Q294.18 481.19 293.28 482.09 L292.56 480.24Z" fill="url(#gHair)"/></svg></div>
<div class="x bl" style="left:320.55px;top:476.23px;font-size:11px;line-height:13.75px;font-weight:bold;transform:scaleX(1.0358);transform-origin:0 50%;">neue Reserv.</div>
<div class="btn" style="left:411px;width:125px"><svg class="a" style="left:0px;top:0px" width="60" height="32" viewBox="412 467 60 32"><path d="M426 476 L428.3 491 Q435 494 441.6 491 L443 475.5Z" fill="url(#gSilver)" stroke="#6e6e6e" stroke-width="0.5"/><ellipse cx="434.5" cy="475.2" rx="8.6" ry="2.9" fill="#4e4e4e" stroke="#a8a8a8" stroke-width="1.1"/><path d="M431 480v10M434.5 480.5v10.5M438 480v10" stroke="#6a6a6a" stroke-width="1" opacity="0.75"/><ellipse cx="425.5" cy="486.6" rx="4.6" ry="6.8" transform="rotate(18 425.5 486.6)" fill="#8f8f8f" stroke="#5e5e5e" stroke-width="0.6"/><ellipse cx="425" cy="486.3" rx="2.8" ry="4.6" transform="rotate(18 425 486.3)" fill="#b5b5b5"/><rect x="424.2" y="484.8" width="1.6" height="3" fill="#666"/></svg></div>
<div class="x bl" style="left:451.55px;top:476.23px;font-size:11px;line-height:13.75px;font-weight:bold;transform:scaleX(1.0245);transform-origin:0 50%;">Löschen</div>
<div class="btn" style="left:541px;width:126px"><svg class="a" style="left:0px;top:0px" width="60" height="32" viewBox="542 467 60 32"><circle cx="562.5" cy="483.3" r="9" fill="#cfe0f8" opacity="0.75"/><path d="M556.3 489.6 L568.7 477" stroke="#b8301a" stroke-width="4.6"/><path d="M556.3 489.6 L568.7 477" stroke="#de4c2e" stroke-width="3.4"/><circle cx="562.5" cy="483.3" r="9.1" fill="none" stroke="#b02414" stroke-width="4.6"/><circle cx="562.5" cy="483.3" r="9.1" fill="none" stroke="#dd4a2c" stroke-width="3.4"/><path d="M554.6 480.2 A8.6 8.6 0 0 1 566.5 475.4" stroke="#f29a72" stroke-width="1.3" fill="none" opacity="0.8"/></svg></div>
<div class="x bl" style="left:581.95px;top:476.23px;font-size:11px;line-height:13.75px;font-weight:bold;transform:scaleX(1.0304);transform-origin:0 50%;">verwerfen</div>
<div class="x" style="left:681.00px;top:465.55px;font-size:10px;line-height:12.5px;transform:scaleX(0.8890);transform-origin:0 50%;">Letzte Änderung:</div>
<div class="x" style="left:686.80px;top:476.25px;font-size:10px;line-height:12.5px;transform:scaleX(0.8715);transform-origin:0 50%;">Glowatzki, Axel</div>
<div class="x" style="left:686.80px;top:486.95px;font-size:10px;line-height:12.5px;transform:scaleX(0.8868);transform-origin:0 50%;">06.08.2024 11:45 Uhr</div>
<div class="a" style="left:21px;top:504px;width:793px;height:240px;border:1px solid #99bbe8;background:#fff"></div>
<div class="a" style="left:22px;top:505px;width:791px;height:21.5px;background:#dfe8f6;border-bottom:1px solid #99bbe8"></div>
<div class="x" style="left:34.85px;top:538.48px;font-size:13px;line-height:16.25px;transform:scaleX(0.9520);transform-origin:0 50%;">Status:</div>
<div class="x" style="left:34.85px;top:561.48px;font-size:13px;line-height:16.25px;transform:scaleX(0.9520);transform-origin:0 50%;">Anrede/Titel:</div>
<div class="x" style="left:34.85px;top:584.48px;font-size:13px;line-height:16.25px;transform:scaleX(0.9520);transform-origin:0 50%;">Name:</div>
<div class="x" style="left:34.85px;top:608.48px;font-size:13px;line-height:16.25px;transform:scaleX(0.9520);transform-origin:0 50%;">Vorname:</div>
<div class="x" style="left:34.85px;top:631.48px;font-size:13px;line-height:16.25px;transform:scaleX(0.9520);transform-origin:0 50%;">Geburtsdatum:</div>
<div class="x" style="left:34.85px;top:654.48px;font-size:13px;line-height:16.25px;transform:scaleX(0.9520);transform-origin:0 50%;">Straße:</div>
<div class="x" style="left:34.85px;top:677.48px;font-size:13px;line-height:16.25px;transform:scaleX(0.9520);transform-origin:0 50%;">AdrZusatz:</div>
<div class="x" style="left:34.85px;top:700.48px;font-size:13px;line-height:16.25px;transform:scaleX(0.9520);transform-origin:0 50%;">PLZ/Ort:</div>
<div class="x" style="left:34.85px;top:723.48px;font-size:13px;line-height:16.25px;transform:scaleX(0.9520);transform-origin:0 50%;">Mail:</div>
<div class="inp" style="left:128px;top:534px;width:135px;height:20px"><div class="trg"><svg class="a" style="left:3px;top:6px" width="9" height="7"><path d="M1 1L4.5 4.8L8 1" stroke="#2b4c9a" stroke-width="2.2" fill="none"/></svg></div></div>
<div class="x" style="left:129.55px;top:537.58px;font-size:13px;line-height:16.25px;color:#666;transform:scaleX(0.9389);transform-origin:0 50%;">angemeldet</div>
<div class="inp" style="left:128px;top:557px;width:65px;height:20px"><div class="trg"><svg class="a" style="left:3px;top:6px" width="9" height="7"><path d="M1 1L4.5 4.8L8 1" stroke="#2b4c9a" stroke-width="2.2" fill="none"/></svg></div></div>
<div class="x" style="left:129.55px;top:560.58px;font-size:13px;line-height:16.25px;color:#666;transform:scaleX(0.9920);transform-origin:0 50%;">Frau</div>
<div class="inp" style="left:197px;top:557px;width:65px;height:20px"><div class="trg"><svg class="a" style="left:3px;top:6px" width="9" height="7"><path d="M1 1L4.5 4.8L8 1" stroke="#2b4c9a" stroke-width="2.2" fill="none"/></svg></div></div>
<div class="inp" style="left:128px;top:580px;width:135px;height:20px"></div>
<div class="x" style="left:129.55px;top:583.58px;font-size:13px;line-height:16.25px;color:#000;transform:scaleX(0.9520);transform-origin:0 50%;">Schäfer</div>
<div class="inp" style="left:128px;top:604px;width:135px;height:20px"></div>
<div class="x" style="left:129.55px;top:607.58px;font-size:13px;line-height:16.25px;color:#000;transform:scaleX(0.9520);transform-origin:0 50%;">Silke</div>
<div class="inp" style="left:128px;top:627px;width:135px;height:20px"><div class="trg"><svg class="a" style="left:1.6px;top:3.6px" width="12" height="12" viewBox="0 0 12 12"><rect x="0.7" y="0.7" width="10" height="10.2" rx="0.8" fill="#fff" stroke="#7fa0cf" stroke-width="1.2"/><path d="M4 1.5v9M7.2 1.5v9M1.2 5.8h9" stroke="#d9dde6" stroke-width="0.8"/><circle cx="8.4" cy="4.2" r="1.7" fill="#fff" stroke="#a81414" stroke-width="1.1"/></svg></div></div>
<div class="x" style="left:129.55px;top:630.58px;font-size:13px;line-height:16.25px;color:#000;transform:scaleX(0.9520);transform-origin:0 50%;">05.10.1966</div>
<div class="inp" style="left:128px;top:650px;width:135px;height:20px"></div>
<div class="x" style="left:129.55px;top:653.58px;font-size:13px;line-height:16.25px;color:#000;transform:scaleX(0.9520);transform-origin:0 50%;">Musterweg 12</div>
<div class="inp" style="left:128px;top:673px;width:135px;height:20px"></div>
<div class="inp" style="left:128px;top:696px;width:54px;height:20px"></div>
<div class="x" style="left:129.55px;top:699.58px;font-size:13px;line-height:16.25px;color:#000;transform:scaleX(0.9520);transform-origin:0 50%;">99999</div>
<div class="inp" style="left:186px;top:696px;width:77px;height:20px"></div>
<div class="x" style="left:187.55px;top:699.58px;font-size:13px;line-height:16.25px;color:#000;transform:scaleX(0.9520);transform-origin:0 50%;">Musterbach</div>
<div class="inp" style="left:128px;top:719px;width:135px;height:20px"></div>
<div class="x" style="left:277.95px;top:538.17px;font-size:13px;line-height:16.25px;transform:scaleX(0.9520);transform-origin:0 50%;">Teiln.-Gebühr:</div>
<div class="x" style="left:277.95px;top:561.48px;font-size:13px;line-height:16.25px;transform:scaleX(0.9520);transform-origin:0 50%;">Firma:</div>
<div class="x" style="left:277.95px;top:584.38px;font-size:13px;line-height:16.25px;transform:scaleX(0.9520);transform-origin:0 50%;">Abteilung:</div>
<div class="x" style="left:277.95px;top:608.08px;font-size:13px;line-height:16.25px;transform:scaleX(0.9520);transform-origin:0 50%;">Bemerkung:</div>
<div class="x" style="left:277.95px;top:680.38px;font-size:13px;line-height:16.25px;transform:scaleX(0.9520);transform-origin:0 50%;">Notiz (intern):</div>
<div class="x" style="left:277.95px;top:731.17px;font-size:13px;line-height:16.25px;transform:scaleX(0.9520);transform-origin:0 50%;">Geb.Anmeld.:</div>
<div class="inp" style="left:366px;top:534px;width:90px;height:20px"></div>
<div class="x" style="left:367.55px;top:537.58px;font-size:13px;line-height:16.25px;color:#000;transform:scaleX(0.9520);transform-origin:0 50%;">42,5</div>
<div class="x" style="left:461.15px;top:538.08px;font-size:13px;line-height:16.25px;transform:scaleX(0.9664);transform-origin:0 50%;">EUR</div>
<svg class="a" style="left:490px;top:535.9px" width="16" height="16" viewBox="-8 -8 16 16"><circle r="7" fill="#7f9fd0" opacity="0.6"/><circle r="6" fill="#3b67a9"/><rect x="-1.1" y="-1.3" width="2.2" height="4.8" fill="#fff"/><circle cy="-3.2" r="1.2" fill="#fff"/></svg>
<div class="inp" style="left:366px;top:557px;width:126px;height:20px"><div class="trg"><svg class="a" style="left:3px;top:6px" width="9" height="7"><path d="M1 1L4.5 4.8L8 1" stroke="#2b4c9a" stroke-width="2.2" fill="none"/></svg></div></div>
<div class="x" style="left:367.55px;top:560.58px;font-size:13px;line-height:16.25px;color:#000;transform:scaleX(0.9520);transform-origin:0 50%;">Gerüstbau AG</div>
<svg class="a" style="left:496px;top:558px" width="18" height="18" viewBox="496 558 18 18"><circle cx="503.5" cy="565.3" r="4.7" fill="#e9ecef" stroke="#8d8d8d" stroke-width="1.3"/><path d="M500.8 563.5 a3.4 3.4 0 0 1 4.6 -1" stroke="#fff" stroke-width="1.2" fill="none"/><path d="M507.3 569 L511.3 572.8" stroke="#5f9030" stroke-width="2.8" stroke-linecap="round"/></svg>
<div class="inp" style="left:366px;top:580px;width:153px;height:20px"></div>
<div class="inp" style="left:366px;top:604px;width:153px;height:67px"></div>
<div class="inp" style="left:366px;top:676px;width:153px;height:45px"></div>
<div class="inp" style="left:366px;top:727px;width:108px;height:20px"></div>
<svg class="a" style="left:479.5px;top:729px" width="16" height="16" viewBox="-8 -8 16 16"><circle r="7" fill="#7f9fd0" opacity="0.6"/><circle r="6" fill="#3b67a9"/><rect x="-1.1" y="-1.3" width="2.2" height="4.8" fill="#fff"/><circle cy="-3.2" r="1.2" fill="#fff"/></svg>
<div class="rad" style="left:535px;top:547.9px"></div>
<div class="x" style="left:549.95px;top:545.57px;font-size:13px;line-height:16.25px;transform:scaleX(0.9405);transform-origin:0 50%;">Selbstzahler</div>
<div class="rad" style="left:535px;top:567.3px"></div>
<div class="x" style="left:549.95px;top:564.97px;font-size:13px;line-height:16.25px;transform:scaleX(0.9655);transform-origin:0 50%;">Praxen und Firmen</div>
<div class="rad" style="left:535px;top:587.2px"><div class="a" style="left:2px;top:2px;width:5px;height:5px;border-radius:50%;background:#777"></div></div>
<div class="x" style="left:549.95px;top:584.88px;font-size:13px;line-height:16.25px;transform:scaleX(0.9637);transform-origin:0 50%;">BG Teilnehmer</div>
<div class="rad" style="left:535px;top:607.0px"></div>
<div class="x" style="left:549.95px;top:604.67px;font-size:13px;line-height:16.25px;transform:scaleX(0.9555);transform-origin:0 50%;">Mitarbeiter (intern)</div>
<div class="a" style="left:813px;top:71px;width:640px;height:1px;background:#a5a5a5"></div>
<div class="a" style="left:814px;top:72px;width:640px;height:22px;background:#dfe8f6;border-bottom:1px solid #99bbe8"></div>
<div class="x" style="left:816.08px;top:74.86px;font-size:14.3px;line-height:17.88px;font-weight:bold;color:#15428b;transform:scaleX(0.9831);transform-origin:0 50%;">Brief</div>
<div class="hd" style="left:819px;top:94px;width:627px;height:19px"></div>
<div class="a" style="left:819px;top:94px;width:287px;height:18.5px;background:linear-gradient(#ebf3fd 0,#ebf3fd 5px,#d9e8fb 6px,#d9e8fb 100%);border-top:1px solid #aaccf6;border-bottom:1px solid #aaccf6"></div>
<div class="hs" style="left:1105.5px;top:94px;height:18px"></div>
<div class="hs" style="left:1313.5px;top:94px;height:18px"></div>
<div class="hs" style="left:1441.5px;top:94px;height:18px"></div>
<div class="x" style="left:824.15px;top:96.17px;font-size:13px;line-height:16.25px;transform:scaleX(0.9438);transform-origin:0 50%;">Bereich</div>
<svg class="a" style="left:868px;top:101.5px" width="8" height="5"><path d="M0 4.5L3.5 0.5L7 4.5Z" fill="#7ea6de"/></svg>
<div class="x" style="left:1112.25px;top:96.17px;font-size:13px;line-height:16.25px;transform:scaleX(0.9520);transform-origin:0 50%;">Briefname</div>
<div class="x" style="left:1320.05px;top:96.17px;font-size:13px;line-height:16.25px;transform:scaleX(0.9520);transform-origin:0 50%;">Verzeichnis</div>
<div class="brow" style="top:113px;height:23.00px"></div>
<div class="x" style="left:834.15px;top:115.78px;font-size:13px;line-height:16.25px;font-weight:bold;transform:scaleX(0.9972);transform-origin:0 50%;">Mail</div>
<div class="x" style="left:865.15px;top:115.78px;font-size:13px;line-height:16.25px;transform:scaleX(0.9520);transform-origin:0 50%;">Absage Firma</div>
<div class="x" style="left:1112.25px;top:115.78px;font-size:13px;line-height:16.25px;transform:scaleX(0.9520);transform-origin:0 50%;">Geschäftsbrief</div>
<div class="x" style="left:1320.05px;top:115.78px;font-size:13px;line-height:16.25px;transform:scaleX(0.9520);transform-origin:0 50%;">KV-Vorlagen</div>
<div class="brow alt" style="top:136px;height:24.00px"></div>
<div class="x" style="left:834.15px;top:139.28px;font-size:13px;line-height:16.25px;font-weight:bold;transform:scaleX(0.9972);transform-origin:0 50%;">Mail</div>
<div class="x" style="left:865.15px;top:139.28px;font-size:13px;line-height:16.25px;transform:scaleX(0.9520);transform-origin:0 50%;">Absage Person</div>
<div class="x" style="left:1112.25px;top:139.28px;font-size:13px;line-height:16.25px;transform:scaleX(0.9520);transform-origin:0 50%;">KV Absage Person</div>
<div class="x" style="left:1320.05px;top:139.28px;font-size:13px;line-height:16.25px;transform:scaleX(0.9520);transform-origin:0 50%;">Eigenes Layout</div>
<div class="brow" style="top:160px;height:23.00px"></div>
<div class="x" style="left:834.15px;top:162.78px;font-size:13px;line-height:16.25px;font-weight:bold;transform:scaleX(0.9972);transform-origin:0 50%;">Mail</div>
<div class="x" style="left:865.15px;top:162.78px;font-size:13px;line-height:16.25px;transform:scaleX(0.9520);transform-origin:0 50%;">Bestätigung Anhang</div>
<div class="x" style="left:1112.25px;top:162.78px;font-size:13px;line-height:16.25px;transform:scaleX(0.9520);transform-origin:0 50%;">Mail Absage Firma</div>
<div class="x" style="left:1320.05px;top:162.78px;font-size:13px;line-height:16.25px;transform:scaleX(0.9520);transform-origin:0 50%;">Standardvorlagen</div>
<div class="brow alt" style="top:183px;height:23.00px"></div>
<div class="x" style="left:834.15px;top:185.78px;font-size:13px;line-height:16.25px;font-weight:bold;transform:scaleX(0.9972);transform-origin:0 50%;">Mail</div>
<div class="x" style="left:865.15px;top:185.78px;font-size:13px;line-height:16.25px;transform:scaleX(0.9520);transform-origin:0 50%;">Bestätigung Firma</div>
<div class="x" style="left:1112.25px;top:185.78px;font-size:13px;line-height:16.25px;transform:scaleX(0.9520);transform-origin:0 50%;">KV bestätigung firma</div>
<div class="x" style="left:1320.05px;top:185.78px;font-size:13px;line-height:16.25px;transform:scaleX(0.9520);transform-origin:0 50%;">Eigenes Layout</div>
<div class="brow sel" style="top:206px;height:24.00px"></div>
<div class="x" style="left:834.15px;top:209.28px;font-size:13px;line-height:16.25px;font-weight:bold;transform:scaleX(0.9972);transform-origin:0 50%;">Mail</div>
<div class="x" style="left:865.15px;top:209.28px;font-size:13px;line-height:16.25px;transform:scaleX(0.9520);transform-origin:0 50%;">Bestätigung Firma (BG)</div>
<div class="x" style="left:1112.25px;top:209.28px;font-size:13px;line-height:16.25px;transform:scaleX(0.9520);transform-origin:0 50%;">Mail Bestätigung Firma (BG)</div>
<div class="x" style="left:1320.05px;top:209.28px;font-size:13px;line-height:16.25px;transform:scaleX(0.9520);transform-origin:0 50%;">Standardvorlagen</div>
<div class="brow alt" style="top:230px;height:23.00px"></div>
<div class="x" style="left:834.15px;top:232.78px;font-size:13px;line-height:16.25px;font-weight:bold;transform:scaleX(0.9972);transform-origin:0 50%;">Mail</div>
<div class="x" style="left:865.15px;top:232.78px;font-size:13px;line-height:16.25px;transform:scaleX(0.9520);transform-origin:0 50%;">Bestätigung Person</div>
<div class="x" style="left:1112.25px;top:232.78px;font-size:13px;line-height:16.25px;transform:scaleX(0.9520);transform-origin:0 50%;">KV bestätigung Person</div>
<div class="x" style="left:1320.05px;top:232.78px;font-size:13px;line-height:16.25px;transform:scaleX(0.9520);transform-origin:0 50%;">Eigenes Layout</div>
<div class="a" style="left:819px;top:253px;width:627px;height:9px;background:#fff"></div>
<div class="a" style="left:818px;top:262px;width:640px;height:92px;border:1px solid #b5b8c8;background:#fff"></div>
<div class="a" style="left:825px;top:257px;width:94.5px;height:10px;background:#fff"></div>
<div class="x" style="left:826.55px;top:257.07px;font-size:9px;line-height:11.25px;font-weight:bold;color:#15428b;transform:scaleX(1.0930);transform-origin:0 50%;">Zusatzinformation</div>
<div class="inp" style="left:828px;top:277.4px;width:640px;height:59.4px"></div>
<div class="a" style="left:814px;top:354px;width:5px;height:390px;background:#fff"></div>
<div class="a" style="left:818px;top:355px;width:640px;height:1px;background:#a8a8a8"></div>
<div class="a" style="left:819px;top:356px;width:640px;height:20px;background:#dfe8f6"></div>
<div class="a" style="left:819px;top:375.5px;width:640px;height:2px;background:#99bbe8"></div>
<div class="x" style="left:821.68px;top:357.86px;font-size:14.3px;line-height:17.88px;font-weight:bold;color:#15428b;transform:scaleX(0.9707);transform-origin:0 50%;">Vorschau</div>
<div class="a" style="left:819px;top:377.5px;width:640px;height:360px;background:#fff"></div>
<div class="a" style="left:818px;top:355px;width:1px;height:380px;background:#b4b4b4"></div>
<div class="a" style="left:819px;top:377px;width:1px;height:360px;background:#9fb6dc"></div>
<div class="a" style="left:820px;top:377.5px;width:1px;height:360px;background:#b9cff0"></div>
<div class="x" style="left:860.37px;top:417.48px;font-family:'Liberation Sans',sans-serif;font-size:7.2px;line-height:8.64px;color:#222;">Verfahrenshinweis: Durch organisatorische Maßnahmen ist zu gewährleisten, dass bei der Unterzeichnung nur die eigenen Personendaten eingesehen werden können. Nutzen</div>
<div class="x" style="left:860.37px;top:427.08px;font-family:'Liberation Sans',sans-serif;font-size:7.2px;line-height:8.64px;color:#222;">Sie bitte die elektronische Formularfunktion dieses Dokuments. Ansonsten füllen Sie es mit einem schwarzen oder dunkelblauen Stift aus.</div>
<div class="x" style="left:859.19px;top:440.69px;font-family:'Liberation Sans',sans-serif;font-size:21.85px;line-height:26.22px;color:#111;-webkit-text-stroke:0.45px #111">Abrechnungsformular</div>
<div class="x" style="left:860.00px;top:472.34px;font-family:'Liberation Sans',sans-serif;font-size:13.27px;line-height:15.92px;color:#111;-webkit-text-stroke:0.3px #111">für die Aus- und Fortbildung</div>
<div class="x" style="left:860.00px;top:486.22px;font-family:'Liberation Sans',sans-serif;font-size:13.29px;line-height:15.95px;color:#111;-webkit-text-stroke:0.3px #111">von betrieblichen Ersthelfenden</div>
<div class="yb" style="left:1169px;top:448px;width:15px;height:13px"></div>
<div class="x" style="left:1172.95px;top:450.10px;font-family:'Liberation Sans',sans-serif;font-size:10.83px;line-height:13.0px;color:#111;">X</div>
<div class="x" style="left:1192.85px;top:451.09px;font-family:'Liberation Sans',sans-serif;font-size:10.85px;line-height:13.02px;color:#111;">Ausbildung</div>
<div class="yb" style="left:1253px;top:448px;width:15px;height:13px"></div>
<div class="x" style="left:1276.84px;top:451.02px;font-family:'Liberation Sans',sans-serif;font-size:10.97px;line-height:13.16px;color:#111;">Fortbildung</div>
<div class="yb" style="left:1169px;top:466px;width:15px;height:13px"></div>
<div class="x" style="left:1193.45px;top:469.32px;font-family:'Liberation Sans',sans-serif;font-size:10.8px;line-height:12.96px;color:#111;">Erste Hilfe in Bildungs- und</div>
<div class="x" style="left:1168.45px;top:484.50px;font-family:'Liberation Sans',sans-serif;font-size:10.84px;line-height:13.01px;color:#111;">Betreuungseinrichtungen</div>
<div class="a" style="left:855px;top:505px;width:283px;height:83px;border:1px solid #1f9a3a"></div>
<div class="a" style="left:1163px;top:505px;width:272px;height:83px;border:1px solid #1f9a3a"></div>
<div class="x" style="left:861.25px;top:511.73px;font-family:'Liberation Sans',sans-serif;font-size:10.79px;line-height:12.95px;color:#111;">Name des Mitgliedsbetriebes:</div>
<div class="x" style="left:861.25px;top:530.60px;font-family:'Liberation Sans',sans-serif;font-size:10.83px;line-height:13.0px;color:#111;">Gerüstbau AG</div>
<div class="x" style="left:861.25px;top:544.30px;font-family:'Liberation Sans',sans-serif;font-size:10.83px;line-height:13.0px;color:#111;">Musterweg1</div>
<div class="x" style="left:861.25px;top:558.00px;font-family:'Liberation Sans',sans-serif;font-size:10.83px;line-height:13.0px;color:#111;">99999 Musterhausen</div>
<div class="x" style="left:1168.95px;top:511.71px;font-family:'Liberation Sans',sans-serif;font-size:10.82px;line-height:12.98px;color:#111;">Zuständiger Unfallversicherungsträger:</div>
<div class="x" style="left:1168.95px;top:525.00px;font-family:'Liberation Sans',sans-serif;font-size:10.83px;line-height:13.0px;color:#111;">(Berufsgenossenschaft, Unfallkasse)</div>
<div class="x" style="left:1168.95px;top:538.70px;font-family:'Liberation Sans',sans-serif;font-size:10.83px;line-height:13.0px;color:#111;">BG BAU</div>
<div class="x" style="left:1168.95px;top:552.01px;font-family:'Liberation Sans',sans-serif;font-size:10.82px;line-height:12.98px;color:#111;">Unternehmensnummer (UNR.S, 15 Ziffern):</div>
<div class="x" style="left:1168.95px;top:565.70px;font-family:'Liberation Sans',sans-serif;font-size:10.83px;line-height:13.0px;color:#111;">97541235</div>
<div class="g" style="left:855px;top:597px;width:580px;height:1px"></div>
<div class="g" style="left:855px;top:649px;width:467px;height:1px"></div>
<div class="g" style="left:855px;top:671px;width:580px;height:1px"></div>
<div class="g" style="left:855px;top:701px;width:580px;height:1px"></div>
<div class="g" style="left:855px;top:732px;width:580px;height:1px"></div>
<div class="g" style="left:855px;top:597px;width:1px;height:138px"></div>
<div class="g" style="left:1434px;top:597px;width:1px;height:138px"></div>
<div class="g" style="left:1322px;top:597px;width:1px;height:138px"></div>
<div class="g" style="left:903px;top:649px;width:1px;height:86px"></div>
<div class="g" style="left:1078px;top:649px;width:1px;height:86px"></div>
<div class="g" style="left:1199px;top:649px;width:1px;height:86px"></div>
<div class="x" style="left:861.03px;top:602.71px;font-family:'Liberation Sans',sans-serif;font-size:14.48px;line-height:17.38px;color:#111;-webkit-text-stroke:0.35px #111">Teilnahmeliste</div>
<div class="x" style="left:968.22px;top:604.12px;font-family:'Liberation Sans',sans-serif;font-size:9.63px;line-height:11.56px;color:#111;">Die Teilnahmeliste ist vom Unternehmen auszufüllen.</div>
<div class="x" style="left:968.22px;top:617.94px;font-family:'Liberation Sans',sans-serif;font-size:9.61px;line-height:11.53px;color:#111;">Die Teilnahme ist von den Teilnehmenden am Tag des Kurses durch Unterschrift</div>
<div class="x" style="left:968.22px;top:631.32px;font-family:'Liberation Sans',sans-serif;font-size:9.63px;line-height:11.56px;color:#111;">zu bestätigen.</div>
<div class="x" style="left:1323.78px;top:613.56px;font-family:'Liberation Sans',sans-serif;font-size:12.06px;line-height:14.47px;color:#111;">Bestätigung</div>
<div class="x" style="left:1323.92px;top:627.92px;font-family:'Liberation Sans',sans-serif;font-size:9.63px;line-height:11.56px;color:#111;">durch die</div>
<div class="x" style="left:1323.92px;top:641.70px;font-family:'Liberation Sans',sans-serif;font-size:9.67px;line-height:11.6px;color:#111;">Ausbildungsstelle</div>
<div class="x" style="left:909.95px;top:654.09px;font-family:'Liberation Sans',sans-serif;font-size:10.86px;line-height:13.03px;color:#111;">Name, Vorname</div>
<div class="x" style="left:1086.05px;top:654.10px;font-family:'Liberation Sans',sans-serif;font-size:10.83px;line-height:13.0px;color:#111;">Geburtstag</div>
<div class="x" style="left:1206.15px;top:654.07px;font-family:'Liberation Sans',sans-serif;font-size:10.89px;line-height:13.07px;color:#111;">Unterschrift</div>
<div class="x" style="left:876.15px;top:683.50px;font-family:'Liberation Sans',sans-serif;font-size:10.83px;line-height:13.0px;color:#111;">1</div>
<div class="x" style="left:876.15px;top:713.50px;font-family:'Liberation Sans',sans-serif;font-size:10.83px;line-height:13.0px;color:#111;">2</div>
<div class="x" style="left:903.95px;top:676.67px;font-family:'Liberation Sans',sans-serif;font-size:10.88px;line-height:13.06px;color:#111;">Karlsson, Gerd</div>
<div class="x" style="left:903.95px;top:706.59px;font-family:'Liberation Sans',sans-serif;font-size:10.86px;line-height:13.03px;color:#111;">Schäfer, Silke</div>
<div class="x" style="left:1079.85px;top:706.60px;font-family:'Liberation Sans',sans-serif;font-size:10.83px;line-height:13.0px;color:#111;">05.10.1966</div>
<div class="yb" style="left:1371px;top:676.5px;width:15px;height:13px"></div>
<div class="yb" style="left:1371px;top:707px;width:15px;height:13px"></div>
</div>
<svg class="a" style="left:0;top:0" width="1446" height="782"><path d="M1116.5 584.6 L1116.4 593.1 L1115.9 601.5 L1115.2 610.0 L1114.1 618.3 L1112.8 626.6 L1111.2 634.8 L1109.3 642.9 L1107.1 651.0 L1104.7 658.8 L1102.0 666.6 L1099.0 674.2 L1095.7 681.6 L1092.2 688.8 L1088.4 695.8 L1084.4 702.7 L1080.2 709.3 L1075.7 715.6 L1071.0 721.7 L1066.1 727.6 L1061.0 733.1 L1055.8 738.4 L1050.3 743.4 L1044.7 748.1 L1038.9 752.5 L1032.9 756.6 L1026.9 760.3 L1020.7 763.7 L1014.3 766.8 L1007.9 769.5 L1001.4 771.9 L994.9 773.9 L988.2 775.6 L981.5 776.8 L974.8 777.8 L968.0 778.3 L961.2 778.5 L953.6 778.3 L946.4 777.8 L939.4 776.9 L932.5 775.7 L925.7 774.1 L919.1 772.1 L912.6 769.8 L906.2 767.2 L899.9 764.2 L893.8 760.9 L887.9 757.2 L882.0 753.2 L876.4 748.9 L870.9 744.3 L865.6 739.3 L860.4 734.1 L855.5 728.5 L850.7 722.7 L846.2 716.5 L841.8 710.2 L837.7 703.5 L833.7 696.6 L830.1 689.5 L826.6 682.2 L823.4 674.7 L820.4 667.1 L817.8 659.2 L815.3 651.3 L813.2 643.2 L811.3 635.0 L809.7 626.7 L808.4 618.4 L807.3 610.0 L806.6 601.6 L806.1 593.1 L806.0 584.6 L806.1 576.2 L806.6 567.7 L807.3 559.3 L808.4 550.8 L809.7 542.4 L811.3 534.0 L813.1 525.7 L815.3 517.5 L817.7 509.4 L820.3 501.5 L823.2 493.7 L826.3 486.1 L829.7 478.7 L833.3 471.5 L837.1 464.5 L841.1 457.8 L845.3 451.4 L849.6 445.3 L854.2 439.5 L859.0 433.9 L863.9 428.7 L869.0 423.9 L874.3 419.3 L879.8 415.1 L885.4 411.2 L891.2 407.6 L897.2 404.4 L903.3 401.6 L909.6 399.0 L916.2 396.9 L922.9 395.0 L929.8 393.5 L936.9 392.3 L944.4 391.5 L952.3 391.0 L961.2 390.8 L968.0 391.0 L974.8 391.5 L981.5 392.5 L988.2 393.7 L994.9 395.4 L1001.4 397.4 L1007.9 399.8 L1014.3 402.5 L1020.7 405.6 L1026.9 409.0 L1032.9 412.7 L1038.9 416.8 L1044.7 421.2 L1050.3 425.9 L1055.8 430.9 L1061.0 436.2 L1066.1 441.7 L1071.0 447.6 L1075.7 453.7 L1080.2 460.0 L1084.4 466.6 L1088.4 473.5 L1092.2 480.5 L1095.7 487.7 L1099.0 495.1 L1102.0 502.7 L1104.7 510.5 L1107.1 518.3 L1109.3 526.4 L1111.2 534.5 L1112.8 542.7 L1114.1 551.0 L1115.2 559.3 L1115.9 567.8 L1116.4 576.2Z" fill="none" stroke="#e31b1c" stroke-width="4.4" stroke-linejoin="round"/></svg>
</body></html>
